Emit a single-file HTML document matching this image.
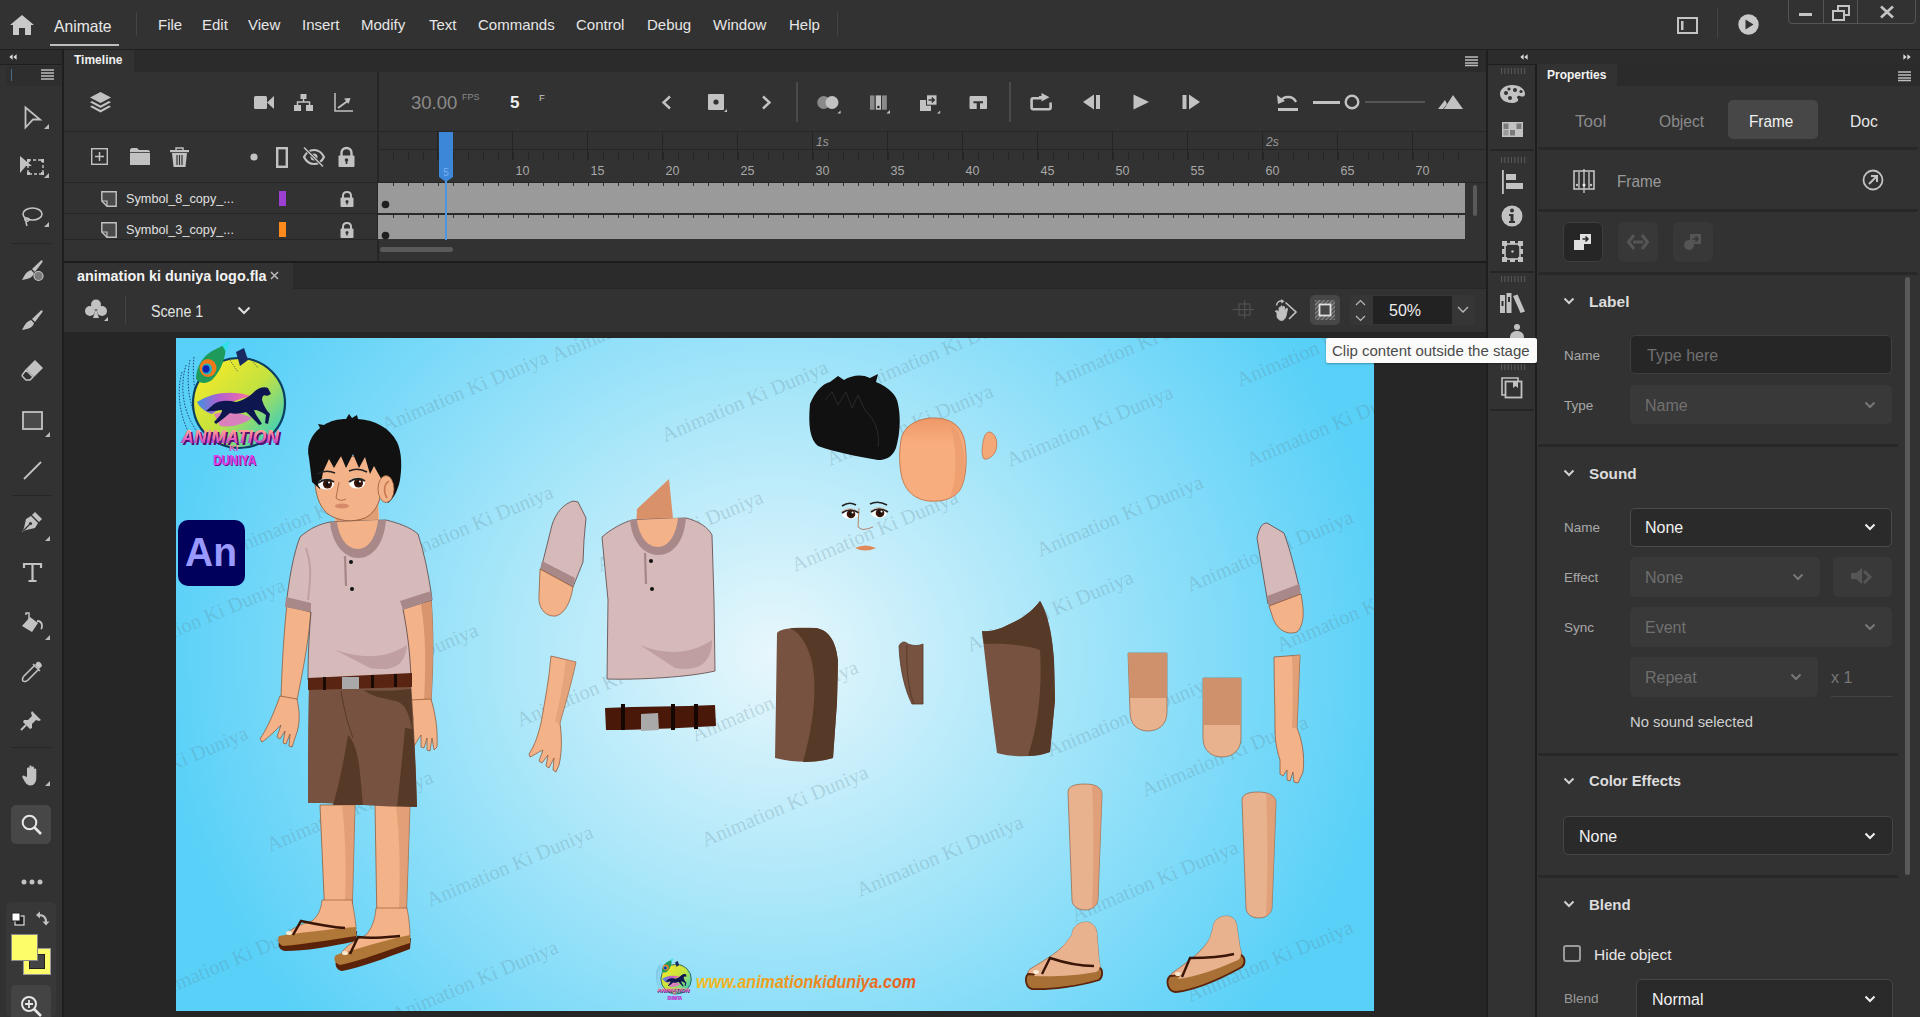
<!DOCTYPE html>
<html><head><meta charset="utf-8">
<style>
*{margin:0;padding:0;box-sizing:border-box}
html,body{width:1920px;height:1017px;overflow:hidden;background:#323232;font-family:"Liberation Sans",sans-serif;color:#d6d6d6}
.a{position:absolute}
.t{position:absolute;white-space:nowrap;line-height:1}
svg{position:absolute;overflow:visible}
</style></head><body>
<!-- MENU BAR -->
<div class="a" style="left:0;top:0;width:1920px;height:49px;background:#323232"></div>
<div class="a" style="left:0;top:49px;width:1920px;height:1px;background:#1f1f1f"></div>


<!-- menu content -->
<svg style="left:10px;top:15px" width="24" height="20" viewBox="0 0 24 20"><path d="M12 0 L24 10 L21 10 L21 20 L15 20 L15 13 L9 13 L9 20 L3 20 L3 10 L0 10 Z" fill="#c9c9c9"/></svg>
<div class="t" style="left:54px;top:18px;font-size:16.5px;color:#e8e8e8;transform:scaleX(0.95);transform-origin:left">Animate</div>
<div class="a" style="left:50px;top:44px;width:69px;height:2px;background:#bdbdbd"></div>
<div class="a" style="left:136px;top:12px;width:1px;height:24px;background:#444"></div>
<div class="t" style="left:158px;top:17px;font-size:15px;color:#e6e6e6">File</div>
<div class="t" style="left:202px;top:17px;font-size:15px;color:#e6e6e6">Edit</div>
<div class="t" style="left:248px;top:17px;font-size:15px;color:#e6e6e6">View</div>
<div class="t" style="left:302px;top:17px;font-size:15px;color:#e6e6e6">Insert</div>
<div class="t" style="left:361px;top:17px;font-size:15px;color:#e6e6e6">Modify</div>
<div class="t" style="left:429px;top:17px;font-size:15px;color:#e6e6e6">Text</div>
<div class="t" style="left:478px;top:17px;font-size:15px;color:#e6e6e6">Commands</div>
<div class="t" style="left:576px;top:17px;font-size:15px;color:#e6e6e6">Control</div>
<div class="t" style="left:647px;top:17px;font-size:15px;color:#e6e6e6">Debug</div>
<div class="t" style="left:713px;top:17px;font-size:15px;color:#e6e6e6">Window</div>
<div class="t" style="left:789px;top:17px;font-size:15px;color:#e6e6e6">Help</div>
<div class="a" style="left:837px;top:12px;width:1px;height:24px;background:#444"></div>
<!-- right side of menu -->
<svg style="left:1677px;top:17px" width="21" height="17" viewBox="0 0 21 17"><rect x="1" y="1" width="19" height="15" fill="none" stroke="#c4c4c4" stroke-width="2"/><rect x="4" y="4" width="2.5" height="9" fill="#c4c4c4"/></svg>
<div class="a" style="left:1717px;top:8px;width:1px;height:30px;background:#444"></div>
<svg style="left:1738px;top:14px" width="21" height="21" viewBox="0 0 21 21"><circle cx="10.5" cy="10.5" r="10.2" fill="#c9c9c9"/><path d="M7.5 5.5 L15.5 10.5 L7.5 15.5 Z" fill="#323232"/></svg>
<div class="a" style="left:1788px;top:-4px;width:128px;height:28px;border:1px solid #555;border-radius:0 0 4px 4px"></div>
<div class="a" style="left:1823px;top:0;width:1px;height:23px;background:#555"></div>
<div class="a" style="left:1857px;top:0;width:1px;height:23px;background:#555"></div>
<div class="a" style="left:1799px;top:13px;width:13px;height:3px;background:#c4c4c4"></div>
<svg style="left:1832px;top:5px" width="19" height="16" viewBox="0 0 19 16"><rect x="6" y="1" width="11" height="9" fill="none" stroke="#c4c4c4" stroke-width="2"/><rect x="1" y="6" width="11" height="9" fill="#323232" stroke="#c4c4c4" stroke-width="2"/></svg>
<svg style="left:1880px;top:6px" width="14" height="12" viewBox="0 0 14 12"><path d="M1 0.5 L13 11.5 M13 0.5 L1 11.5" stroke="#c4c4c4" stroke-width="2.6"/></svg>

<!-- LEFT TOOLBAR -->
<div class="a" style="left:0;top:50px;width:63px;height:967px;background:#323232"></div>
<div class="a" style="left:0;top:50px;width:63px;height:14px;background:#2c2c2c"></div>
<div class="a" style="left:0;top:64px;width:63px;height:1px;background:#1e1e1e"></div>
<div class="a" style="left:62px;top:50px;width:2px;height:967px;background:#1e1e1e"></div>


<!-- toolbar content -->
<svg style="left:9px;top:54px" width="8" height="6" viewBox="0 0 8 6"><path d="M3.6 0.3L0.3 3L3.6 5.7Z M7.6 0.3L4.3 3L7.6 5.7Z" fill="#ddd"/></svg>
<div class="a" style="left:6px;top:66px;width:56px;height:20px;background:#2e2e2e"></div>
<div class="a" style="left:11px;top:69px;width:1px;height:12px;background:#4a6a8a"></div>
<svg style="left:41px;top:69px" width="13" height="11" viewBox="0 0 13 11"><path d="M0 1H13M0 4H13M0 7H13M0 10H13" stroke="#bdbdbd" stroke-width="1.3"/></svg>
<svg style="left:24px;top:106px" width="18" height="24" viewBox="0 0 18 24"><path d="M1.5 1.5L16 13.5H9L1.5 21.5Z" fill="none" stroke="#c2c2c2" stroke-width="1.8" stroke-linejoin="miter"/></svg>
<svg style="left:44px;top:124px" width="5" height="5" viewBox="0 0 5 5"><path d="M5 0V5H0Z" fill="#bbb"/></svg>
<svg style="left:20px;top:156px" width="25" height="20" viewBox="0 0 25 20"><path d="M0 0L12 10H6L0 17Z" fill="#c2c2c2"/><rect x="8" y="4" width="15" height="14" fill="none" stroke="#c2c2c2" stroke-width="1.4" stroke-dasharray="3 2"/><rect x="7" y="3" width="3" height="3" fill="#c2c2c2"/><rect x="21" y="3" width="3" height="3" fill="#c2c2c2"/><rect x="7" y="16" width="3" height="3" fill="#c2c2c2"/><rect x="21" y="16" width="3" height="3" fill="#c2c2c2"/></svg>
<svg style="left:44px;top:173px" width="5" height="5" viewBox="0 0 5 5"><path d="M5 0V5H0Z" fill="#bbb"/></svg>
<svg style="left:21px;top:207px" width="22" height="20" viewBox="0 0 22 20"><ellipse cx="11.5" cy="7" rx="9.5" ry="6" fill="none" stroke="#c2c2c2" stroke-width="1.6"/><path d="M4 11C3 13 5 15 7 14C9 13 8 11 6 11C4 11 5 16 6 19" stroke="#c2c2c2" stroke-width="1.5" fill="none"/></svg>
<svg style="left:44px;top:222px" width="5" height="5" viewBox="0 0 5 5"><path d="M5 0V5H0Z" fill="#bbb"/></svg>
<div class="a" style="left:12px;top:243px;width:39px;height:1px;background:#262626"></div>
<svg style="left:22px;top:260px" width="22" height="21" viewBox="0 0 22 21"><path d="M19 0.5C20 0 21 1 20.5 2L13 12L10 9Z" fill="#c2c2c2"/><path d="M9 10L12 13C11 17 7 19 0 20C2 17 3 12 9 10Z" fill="#c2c2c2"/><circle cx="16.5" cy="16" r="4.5" fill="#7a7a7a" stroke="#c2c2c2" stroke-width="1.2"/></svg>
<svg style="left:22px;top:310px" width="21" height="20" viewBox="0 0 21 20"><path d="M19 0.5C20 0 21 1 20.5 2L13 12L10 9Z" fill="#c2c2c2"/><path d="M9 10L12 13C11 17 7 19 0 20C2 17 3 12 9 10Z" fill="#c2c2c2"/></svg>
<svg style="left:22px;top:360px" width="21" height="20" viewBox="0 0 21 20"><path d="M13 0L21 8L12 17L4 9Z" fill="#c2c2c2"/><path d="M4 10L11 17L8 20H4L0.8 16.8C0 16 0 15 0.8 14.2Z" fill="none" stroke="#c2c2c2" stroke-width="1.5"/></svg>
<svg style="left:22px;top:411px" width="21" height="19" viewBox="0 0 21 19"><rect x="1" y="1" width="19" height="17" fill="#4a4a4a" stroke="#c2c2c2" stroke-width="1.8"/></svg>
<svg style="left:45px;top:432px" width="5" height="5" viewBox="0 0 5 5"><path d="M5 0V5H0Z" fill="#bbb"/></svg>
<svg style="left:23px;top:461px" width="19" height="19" viewBox="0 0 19 19"><path d="M1 18L18 1" stroke="#c2c2c2" stroke-width="1.8"/></svg>
<div class="a" style="left:12px;top:495px;width:39px;height:1px;background:#262626"></div>
<svg style="left:21px;top:512px" width="21" height="21" viewBox="0 0 21 21"><path d="M14 0L21 7L18 10L11 3Z" fill="#c2c2c2"/><path d="M10 4L17 11L14 16L5 18L1 20L3 16L5 7Z" fill="#c2c2c2"/><path d="M2 19L8.5 12.5" stroke="#323232" stroke-width="1.3"/><circle cx="9.5" cy="11.5" r="1.6" fill="#323232"/></svg>
<svg style="left:45px;top:536px" width="5" height="5" viewBox="0 0 5 5"><path d="M5 0V5H0Z" fill="#bbb"/></svg>
<svg style="left:23px;top:563px" width="19" height="19" viewBox="0 0 19 19"><path d="M1 5V1H18V5M9.5 1V18M5.5 18H13.5" stroke="#c2c2c2" stroke-width="2.2" fill="none"/></svg>
<svg style="left:21px;top:612px" width="22" height="21" viewBox="0 0 22 21"><path d="M9 5L17 11L11 20L1 14Z" fill="#c2c2c2"/><path d="M5 3V1H8V7" stroke="#c2c2c2" stroke-width="1.5" fill="none"/><path d="M16 9C19 9 21 11 21 14C21 16 20 17 20 17" stroke="#c2c2c2" stroke-width="1.8" fill="none"/></svg>
<svg style="left:45px;top:635px" width="5" height="5" viewBox="0 0 5 5"><path d="M5 0V5H0Z" fill="#bbb"/></svg>
<svg style="left:21px;top:661px" width="22" height="22" viewBox="0 0 22 22"><path d="M16 1C18 -0.5 22 3 20.5 5.5L18 8L14 4Z" fill="#c2c2c2"/><path d="M12 3L19 10M13 5L3 15C1.5 16.5 1 19 2 20C3 21 5.5 20.5 7 19L17 9" stroke="#c2c2c2" stroke-width="1.6" fill="none"/></svg>
<svg style="left:20px;top:711px" width="21" height="20" viewBox="0 0 21 20"><path d="M12 0L21 9L19 10L16 9L12 13L12 17L10 18L3 11L4 9L8 9L12 5L11 2Z" fill="#c2c2c2"/><path d="M6 14L1 19" stroke="#c2c2c2" stroke-width="2"/></svg>
<div class="a" style="left:12px;top:747px;width:39px;height:1px;background:#262626"></div>
<svg style="left:22px;top:765px" width="20" height="21" viewBox="0 0 20 21"><path d="M5 12V3.5C5 2 7.3 2 7.3 3.5V10V1.8C7.3 0.2 9.7 0.2 9.7 1.8V10V2.5C9.7 1 12 1 12 2.5V10V4.5C12 3 14.3 3 14.3 4.5V13C14.3 17 12 20.5 8.5 20.5C6 20.5 4.5 19 3 17L0.5 12.5C-0.2 11 1.5 10 2.5 11Z" fill="#c2c2c2"/></svg>
<svg style="left:45px;top:781px" width="5" height="5" viewBox="0 0 5 5"><path d="M5 0V5H0Z" fill="#bbb"/></svg>
<div class="a" style="left:11px;top:805px;width:40px;height:39px;border-radius:5px;background:#474747"></div>
<svg style="left:21px;top:814px" width="21" height="21" viewBox="0 0 21 21"><circle cx="8.5" cy="8.5" r="6.8" fill="none" stroke="#e6e6e6" stroke-width="2"/><path d="M13.5 13.5L20 20" stroke="#e6e6e6" stroke-width="2.6"/></svg>
<svg style="left:21px;top:879px" width="22" height="6" viewBox="0 0 22 6"><circle cx="3" cy="3" r="2.5" fill="#c2c2c2"/><circle cx="11" cy="3" r="2.5" fill="#c2c2c2"/><circle cx="19" cy="3" r="2.5" fill="#c2c2c2"/></svg>
<div class="a" style="left:6px;top:902px;width:50px;height:115px;border-radius:5px;background:#383838"></div>
<svg style="left:11px;top:912px" width="14" height="14" viewBox="0 0 14 14"><rect x="4" y="4" width="9" height="9" fill="#222" stroke="#ddd" stroke-width="1.2"/><rect x="1" y="1" width="8" height="8" fill="#fff" stroke="#222" stroke-width="1"/></svg>
<svg style="left:36px;top:911px" width="14" height="15" viewBox="0 0 14 15"><path d="M3 4C8 4 10 6 10 11" stroke="#c2c2c2" stroke-width="2" fill="none"/><path d="M0 4L4 0.5V7.5Z" fill="#c2c2c2"/><path d="M6.5 10.5H13.5L10 14.5Z" fill="#c2c2c2"/></svg>
<div class="a" style="left:23px;top:948px;width:28px;height:27px;background:#fdfd6a;border:1px solid #999"></div>
<div class="a" style="left:29px;top:954px;width:16px;height:15px;background:#444;border:1.5px solid #222"></div>
<div class="a" style="left:11px;top:934px;width:27px;height:27px;background:#fdfd6a;border:1px solid #888"></div>
<div class="a" style="left:11px;top:985px;width:40px;height:39px;border-radius:5px;background:#444"></div>
<svg style="left:20px;top:995px" width="22" height="22" viewBox="0 0 22 22"><circle cx="9" cy="9" r="7" fill="none" stroke="#e6e6e6" stroke-width="2"/><path d="M9 5V13M5 9H13" stroke="#e6e6e6" stroke-width="1.8"/><path d="M14 14L21 21" stroke="#e6e6e6" stroke-width="2.6"/></svg>

<!-- TIMELINE PANEL -->
<div class="a" style="left:64px;top:50px;width:1422px;height:211px;background:#323232"></div>
<div class="a" style="left:134px;top:50px;width:1352px;height:22px;background:#2b2b2b"></div>


<!-- timeline content -->
<div class="t" style="left:74px;top:54px;font-size:12px;font-weight:bold;color:#f0f0f0">Timeline</div>
<svg style="left:1465px;top:56px" width="13" height="10" viewBox="0 0 13 10"><path d="M0 1H13M0 4H13M0 7H13M0 9.5H13" stroke="#bdbdbd" stroke-width="1.3"/></svg>
<!-- header row icons -->
<svg style="left:90px;top:92px" width="21" height="21" viewBox="0 0 21 21"><path d="M10.5 0 L21 5.5 L10.5 11 L0 5.5Z" fill="#c2c2c2"/><path d="M2 9 L10.5 13.5 L19 9 L21 10.2 L10.5 16 L0 10.2Z" fill="#c2c2c2"/><path d="M2 13.5 L10.5 18 L19 13.5 L21 14.7 L10.5 20.5 L0 14.7Z" fill="#c2c2c2"/></svg>
<svg style="left:254px;top:95px" width="20" height="15" viewBox="0 0 20 15"><rect x="0" y="1" width="13" height="13" rx="1.5" fill="#c2c2c2"/><path d="M13 7.5 L20 1 L20 14 Z" fill="#c2c2c2"/></svg>
<svg style="left:294px;top:94px" width="19" height="17" viewBox="0 0 19 17"><rect x="6.5" y="0" width="6" height="5" fill="#c2c2c2"/><rect x="0" y="11" width="7" height="6" fill="#c2c2c2"/><rect x="12" y="11" width="7" height="6" fill="#c2c2c2"/><path d="M9.5 5V8M3.5 11V8H15.5V11" stroke="#c2c2c2" stroke-width="1.5" fill="none"/></svg>
<svg style="left:334px;top:93px" width="19" height="19" viewBox="0 0 19 19"><path d="M1 0V18H19" stroke="#c2c2c2" stroke-width="1.5" fill="none"/><path d="M4 15 L15 7" stroke="#c2c2c2" stroke-width="1.8"/><path d="M10 5.5 L16.5 5 L14.5 11Z" fill="#c2c2c2"/></svg>
<div class="t" style="left:411px;top:94px;font-size:18.5px;color:#8a8a8a">30.00</div>
<div class="t" style="left:462px;top:93px;font-size:9px;color:#8a8a8a">FPS</div>
<div class="t" style="left:510px;top:94px;font-size:17px;font-weight:bold;color:#f0f0f0">5</div>
<div class="t" style="left:539px;top:93px;font-size:9.5px;color:#c8c8c8">F</div>
<svg style="left:661px;top:95px" width="11" height="15" viewBox="0 0 11 15"><path d="M9 1.5 L2.5 7.5 L9 13.5" stroke="#c2c2c2" stroke-width="2.4" fill="none"/></svg>
<svg style="left:708px;top:93px" width="19" height="19" viewBox="0 0 19 19"><rect x="0" y="1" width="16" height="16" rx="1" fill="#c2c2c2"/><circle cx="8" cy="9" r="2.6" fill="#323232"/><path d="M19 16V19H16Z" fill="#c2c2c2"/></svg>
<svg style="left:761px;top:95px" width="11" height="15" viewBox="0 0 11 15"><path d="M2 1.5 L8.5 7.5 L2 13.5" stroke="#c2c2c2" stroke-width="2.4" fill="none"/></svg>
<div class="a" style="left:796px;top:82px;width:2px;height:40px;background:#4a4a4a"></div>
<svg style="left:817px;top:95px" width="24" height="19" viewBox="0 0 24 19"><circle cx="6.7" cy="7.5" r="6.5" fill="#8a8a8a"/><circle cx="15" cy="7.5" r="6.5" fill="#c2c2c2"/><path d="M23.6 15.4V18.6H20.4Z" fill="#c2c2c2"/></svg>
<svg style="left:869px;top:94px" width="22" height="20" viewBox="0 0 22 20"><rect x="1" y="1.4" width="4.5" height="14.3" fill="#8a8a8a"/><rect x="6.8" y="1.4" width="5.2" height="14.3" fill="#c2c2c2"/><rect x="13" y="1.4" width="4.8" height="14.3" fill="#8a8a8a"/><circle cx="9.4" cy="13" r="1.3" fill="#222"/><path d="M21 16V19.6H17.4Z" fill="#c2c2c2"/></svg>
<svg style="left:919px;top:94px" width="22" height="20" viewBox="0 0 22 20"><rect x="1" y="6" width="11" height="11" fill="#c2c2c2"/><rect x="7.5" y="0.8" width="10.5" height="10.4" fill="#c2c2c2" stroke="#323232" stroke-width="1"/><path d="M9.5 6H15M12.8 3.6L15.2 6L12.8 8.4" stroke="#323232" stroke-width="1.5" fill="none"/><path d="M21.2 16.4V19.6H18Z" fill="#c2c2c2"/></svg>
<svg style="left:969px;top:95px" width="19" height="15" viewBox="0 0 19 15"><path d="M2 1H16.5C17.5 1 18 1.5 18 2.5V13C18 13.5 17.5 14 17 14H11V8.2H14V6.3H4.4V8.2H7.7V14H1.5C1 14 0.5 13.5 0.5 13V2.5C0.5 1.5 1 1 2 1Z" fill="#c2c2c2"/></svg>
<div class="a" style="left:1009px;top:82px;width:2px;height:40px;background:#4a4a4a"></div>
<svg style="left:1030px;top:93px" width="22" height="18" viewBox="0 0 22 18"><path d="M11 5.3H3.2C2.2 5.3 1.6 5.9 1.6 6.9V14.6C1.6 15.6 2.2 16.2 3.2 16.2H19C20 16.2 20.6 15.6 20.6 14.6V9.5" stroke="#c2c2c2" stroke-width="2.6" fill="none"/><path d="M11.5 0L19.5 4.2L11.5 8.4Z" fill="#c2c2c2"/><rect x="9" y="3" width="3.5" height="3" fill="#c2c2c2"/></svg>
<svg style="left:1083px;top:94px" width="18" height="16" viewBox="0 0 18 16"><path d="M0 8L11 0.5V15.5Z" fill="#c2c2c2"/><rect x="13" y="1" width="4" height="14" fill="#c2c2c2"/></svg>
<svg style="left:1133px;top:94px" width="17" height="16" viewBox="0 0 17 16"><path d="M0.5 0.5L16 8L0.5 15.5Z" fill="#c2c2c2"/></svg>
<svg style="left:1182px;top:94px" width="18" height="16" viewBox="0 0 18 16"><rect x="0.5" y="1" width="4" height="14" fill="#c2c2c2"/><path d="M18 8L7 0.5V15.5Z" fill="#c2c2c2"/></svg>
<svg style="left:1277px;top:93px" width="22" height="19" viewBox="0 0 22 19"><path d="M4 8C6 3 16 2 19 9" stroke="#c2c2c2" stroke-width="2.4" fill="none"/><path d="M0 2L1 11L8 8Z" fill="#c2c2c2"/><rect x="1" y="15" width="20" height="3" fill="#c2c2c2"/></svg>
<div class="a" style="left:1313px;top:101px;width:27px;height:2.5px;background:#c2c2c2"></div>
<svg style="left:1344px;top:94px" width="16" height="16" viewBox="0 0 16 16"><circle cx="8" cy="8" r="6.3" fill="none" stroke="#c2c2c2" stroke-width="2.4"/></svg>
<div class="a" style="left:1365px;top:101px;width:60px;height:2px;background:#555"></div>
<svg style="left:1438px;top:95px" width="25" height="14" viewBox="0 0 25 14"><path d="M0 14L7 5L9 9L5 14Z" fill="#c2c2c2"/><path d="M6 14L15 0L25 14Z" fill="#c2c2c2"/></svg>
<!-- separators -->
<div class="a" style="left:64px;top:131px;width:1422px;height:1px;background:#262626"></div>
<div class="a" style="left:64px;top:182px;width:1422px;height:1px;background:#262626"></div>
<div class="a" style="left:377px;top:72px;width:1.5px;height:189px;background:#262626"></div>
<!-- layer control row -->
<svg style="left:91px;top:148px" width="17" height="17" viewBox="0 0 17 17"><rect x="0.7" y="0.7" width="15.6" height="15.6" fill="none" stroke="#c2c2c2" stroke-width="1.4"/><path d="M8.5 4V13M4 8.5H13" stroke="#c2c2c2" stroke-width="1.5"/></svg>
<svg style="left:130px;top:148px" width="20" height="17" viewBox="0 0 20 17"><path d="M0 2C0 1 1 0 2 0H7L9 2H18C19 2 20 3 20 4V17H0Z" fill="#c2c2c2"/><path d="M0 4.5H20" stroke="#323232" stroke-width="0.8"/></svg>
<svg style="left:170px;top:147px" width="19" height="20" viewBox="0 0 19 20"><path d="M6 3V1H13V3" stroke="#c2c2c2" stroke-width="1.4" fill="none"/><rect x="0" y="3" width="19" height="2.2" fill="#c2c2c2"/><path d="M2 6H17L15.5 20H3.5Z" fill="#c2c2c2"/><path d="M7 8V18M9.5 8V18M12 8V18" stroke="#323232" stroke-width="1.2"/></svg>
<svg style="left:250px;top:153px" width="8" height="8" viewBox="0 0 8 8"><circle cx="4" cy="4" r="3.6" fill="#c2c2c2"/></svg>
<svg style="left:276px;top:147px" width="12" height="21" viewBox="0 0 12 21"><rect x="1.2" y="1.2" width="9.6" height="18.6" fill="none" stroke="#c2c2c2" stroke-width="2.4"/></svg>
<svg style="left:303px;top:147px" width="22" height="20" viewBox="0 0 22 20"><path d="M1 10C4 4 9 3 11 3C13 3 18 4 21 10C18 16 13 17 11 17C9 17 4 16 1 10Z" fill="none" stroke="#c2c2c2" stroke-width="2.2"/><circle cx="11" cy="10" r="3.5" fill="#c2c2c2"/><path d="M1 0.5L20 19.5" stroke="#323232" stroke-width="3"/><path d="M1 0.5L20 19.5" stroke="#c2c2c2" stroke-width="1.6"/></svg>
<svg style="left:338px;top:147px" width="17" height="20" viewBox="0 0 17 20"><path d="M3.5 9V6C3.5 3 5.5 1 8.5 1C11.5 1 13.5 3 13.5 6V9" stroke="#c2c2c2" stroke-width="2.4" fill="none"/><rect x="0.5" y="8.5" width="16" height="11.5" rx="1" fill="#c2c2c2"/><circle cx="8.5" cy="13" r="1.8" fill="#323232"/><rect x="7.7" y="13" width="1.6" height="4" fill="#323232"/></svg>
<!-- layer rows -->
<div class="a" style="left:64px;top:213px;width:314px;height:1px;background:#262626"></div>
<div class="a" style="left:64px;top:239px;width:314px;height:1px;background:#262626"></div>
<svg style="left:101px;top:191px" width="16" height="16" viewBox="0 0 16 16"><path d="M0.8 0.8H15.2V15.2H6L0.8 10Z" fill="#4a4a4a" stroke="#c2c2c2" stroke-width="1.4"/><path d="M0.8 10H6V15.2" stroke="#c2c2c2" stroke-width="1.2" fill="none"/><path d="M2.5 11.5L4.5 13.5" stroke="#c2c2c2" stroke-width="1"/></svg>
<div class="t" style="left:126px;top:193px;font-size:12.7px;color:#e0e0e0">Symbol_8_copy_...</div>
<div class="a" style="left:279px;top:191px;width:7px;height:15px;background:#9b40d1"></div>
<svg style="left:340px;top:191px" width="14" height="16" viewBox="0 0 14 16"><path d="M3 7V5C3 2.5 4.5 1 7 1C9.5 1 11 2.5 11 5V7" stroke="#c2c2c2" stroke-width="2" fill="none"/><rect x="0.5" y="6.5" width="13" height="9.5" rx="1" fill="#c2c2c2"/><circle cx="7" cy="10.5" r="1.5" fill="#323232"/><rect x="6.3" y="10.5" width="1.4" height="3" fill="#323232"/></svg>
<svg style="left:101px;top:222px" width="16" height="16" viewBox="0 0 16 16"><path d="M0.8 0.8H15.2V15.2H6L0.8 10Z" fill="#4a4a4a" stroke="#c2c2c2" stroke-width="1.4"/><path d="M0.8 10H6V15.2" stroke="#c2c2c2" stroke-width="1.2" fill="none"/><path d="M2.5 11.5L4.5 13.5" stroke="#c2c2c2" stroke-width="1"/></svg>
<div class="t" style="left:126px;top:224px;font-size:12.7px;color:#e0e0e0">Symbol_3_copy_...</div>
<div class="a" style="left:279px;top:222px;width:7px;height:15px;background:#ff8a1c"></div>
<svg style="left:340px;top:222px" width="14" height="16" viewBox="0 0 14 16"><path d="M3 7V5C3 2.5 4.5 1 7 1C9.5 1 11 2.5 11 5V7" stroke="#c2c2c2" stroke-width="2" fill="none"/><rect x="0.5" y="6.5" width="13" height="9.5" rx="1" fill="#c2c2c2"/><circle cx="7" cy="10.5" r="1.5" fill="#323232"/><rect x="6.3" y="10.5" width="1.4" height="3" fill="#323232"/></svg>

<div class="a" style="left:378px;top:149px;width:1108px;height:1px;background:#262626"></div>
<div class="a" style="left:377.5px;top:152px;width:1.5px;height:8px;background:#262626"></div>
<div class="a" style="left:392.5px;top:152px;width:1.5px;height:8px;background:#262626"></div>
<div class="a" style="left:407.5px;top:152px;width:1.5px;height:8px;background:#262626"></div>
<div class="a" style="left:422.5px;top:152px;width:1.5px;height:8px;background:#262626"></div>
<div class="a" style="left:437.5px;top:152px;width:1.5px;height:8px;background:#262626"></div>
<div class="a" style="left:452.5px;top:152px;width:1.5px;height:8px;background:#262626"></div>
<div class="a" style="left:467.5px;top:152px;width:1.5px;height:8px;background:#262626"></div>
<div class="a" style="left:482.5px;top:152px;width:1.5px;height:8px;background:#262626"></div>
<div class="a" style="left:497.5px;top:152px;width:1.5px;height:8px;background:#262626"></div>
<div class="a" style="left:512.5px;top:152px;width:1.5px;height:8px;background:#262626"></div>
<div class="a" style="left:527.5px;top:152px;width:1.5px;height:8px;background:#262626"></div>
<div class="a" style="left:542.5px;top:152px;width:1.5px;height:8px;background:#262626"></div>
<div class="a" style="left:557.5px;top:152px;width:1.5px;height:8px;background:#262626"></div>
<div class="a" style="left:572.5px;top:152px;width:1.5px;height:8px;background:#262626"></div>
<div class="a" style="left:587.5px;top:152px;width:1.5px;height:8px;background:#262626"></div>
<div class="a" style="left:602.5px;top:152px;width:1.5px;height:8px;background:#262626"></div>
<div class="a" style="left:617.5px;top:152px;width:1.5px;height:8px;background:#262626"></div>
<div class="a" style="left:632.5px;top:152px;width:1.5px;height:8px;background:#262626"></div>
<div class="a" style="left:647.5px;top:152px;width:1.5px;height:8px;background:#262626"></div>
<div class="a" style="left:662.5px;top:152px;width:1.5px;height:8px;background:#262626"></div>
<div class="a" style="left:677.5px;top:152px;width:1.5px;height:8px;background:#262626"></div>
<div class="a" style="left:692.5px;top:152px;width:1.5px;height:8px;background:#262626"></div>
<div class="a" style="left:707.5px;top:152px;width:1.5px;height:8px;background:#262626"></div>
<div class="a" style="left:722.5px;top:152px;width:1.5px;height:8px;background:#262626"></div>
<div class="a" style="left:737.5px;top:152px;width:1.5px;height:8px;background:#262626"></div>
<div class="a" style="left:752.5px;top:152px;width:1.5px;height:8px;background:#262626"></div>
<div class="a" style="left:767.5px;top:152px;width:1.5px;height:8px;background:#262626"></div>
<div class="a" style="left:782.5px;top:152px;width:1.5px;height:8px;background:#262626"></div>
<div class="a" style="left:797.5px;top:152px;width:1.5px;height:8px;background:#262626"></div>
<div class="a" style="left:812.5px;top:152px;width:1.5px;height:8px;background:#262626"></div>
<div class="a" style="left:827.5px;top:152px;width:1.5px;height:8px;background:#262626"></div>
<div class="a" style="left:842.5px;top:152px;width:1.5px;height:8px;background:#262626"></div>
<div class="a" style="left:857.5px;top:152px;width:1.5px;height:8px;background:#262626"></div>
<div class="a" style="left:872.5px;top:152px;width:1.5px;height:8px;background:#262626"></div>
<div class="a" style="left:887.5px;top:152px;width:1.5px;height:8px;background:#262626"></div>
<div class="a" style="left:902.5px;top:152px;width:1.5px;height:8px;background:#262626"></div>
<div class="a" style="left:917.5px;top:152px;width:1.5px;height:8px;background:#262626"></div>
<div class="a" style="left:932.5px;top:152px;width:1.5px;height:8px;background:#262626"></div>
<div class="a" style="left:947.5px;top:152px;width:1.5px;height:8px;background:#262626"></div>
<div class="a" style="left:962.5px;top:152px;width:1.5px;height:8px;background:#262626"></div>
<div class="a" style="left:977.5px;top:152px;width:1.5px;height:8px;background:#262626"></div>
<div class="a" style="left:992.5px;top:152px;width:1.5px;height:8px;background:#262626"></div>
<div class="a" style="left:1007.5px;top:152px;width:1.5px;height:8px;background:#262626"></div>
<div class="a" style="left:1022.5px;top:152px;width:1.5px;height:8px;background:#262626"></div>
<div class="a" style="left:1037.5px;top:152px;width:1.5px;height:8px;background:#262626"></div>
<div class="a" style="left:1052.5px;top:152px;width:1.5px;height:8px;background:#262626"></div>
<div class="a" style="left:1067.5px;top:152px;width:1.5px;height:8px;background:#262626"></div>
<div class="a" style="left:1082.5px;top:152px;width:1.5px;height:8px;background:#262626"></div>
<div class="a" style="left:1097.5px;top:152px;width:1.5px;height:8px;background:#262626"></div>
<div class="a" style="left:1112.5px;top:152px;width:1.5px;height:8px;background:#262626"></div>
<div class="a" style="left:1127.5px;top:152px;width:1.5px;height:8px;background:#262626"></div>
<div class="a" style="left:1142.5px;top:152px;width:1.5px;height:8px;background:#262626"></div>
<div class="a" style="left:1157.5px;top:152px;width:1.5px;height:8px;background:#262626"></div>
<div class="a" style="left:1172.5px;top:152px;width:1.5px;height:8px;background:#262626"></div>
<div class="a" style="left:1187.5px;top:152px;width:1.5px;height:8px;background:#262626"></div>
<div class="a" style="left:1202.5px;top:152px;width:1.5px;height:8px;background:#262626"></div>
<div class="a" style="left:1217.5px;top:152px;width:1.5px;height:8px;background:#262626"></div>
<div class="a" style="left:1232.5px;top:152px;width:1.5px;height:8px;background:#262626"></div>
<div class="a" style="left:1247.5px;top:152px;width:1.5px;height:8px;background:#262626"></div>
<div class="a" style="left:1262.5px;top:152px;width:1.5px;height:8px;background:#262626"></div>
<div class="a" style="left:1277.5px;top:152px;width:1.5px;height:8px;background:#262626"></div>
<div class="a" style="left:1292.5px;top:152px;width:1.5px;height:8px;background:#262626"></div>
<div class="a" style="left:1307.5px;top:152px;width:1.5px;height:8px;background:#262626"></div>
<div class="a" style="left:1322.5px;top:152px;width:1.5px;height:8px;background:#262626"></div>
<div class="a" style="left:1337.5px;top:152px;width:1.5px;height:8px;background:#262626"></div>
<div class="a" style="left:1352.5px;top:152px;width:1.5px;height:8px;background:#262626"></div>
<div class="a" style="left:1367.5px;top:152px;width:1.5px;height:8px;background:#262626"></div>
<div class="a" style="left:1382.5px;top:152px;width:1.5px;height:8px;background:#262626"></div>
<div class="a" style="left:1397.5px;top:152px;width:1.5px;height:8px;background:#262626"></div>
<div class="a" style="left:1412.5px;top:152px;width:1.5px;height:8px;background:#262626"></div>
<div class="a" style="left:1427.5px;top:152px;width:1.5px;height:8px;background:#262626"></div>
<div class="a" style="left:1442.5px;top:152px;width:1.5px;height:8px;background:#262626"></div>
<div class="a" style="left:1457.5px;top:152px;width:1.5px;height:8px;background:#262626"></div>
<div class="t" style="left:502.5px;width:40px;text-align:center;top:165px;font-size:12.5px;color:#a8a8a8">10</div>
<div class="t" style="left:577.5px;width:40px;text-align:center;top:165px;font-size:12.5px;color:#a8a8a8">15</div>
<div class="t" style="left:652.5px;width:40px;text-align:center;top:165px;font-size:12.5px;color:#a8a8a8">20</div>
<div class="t" style="left:727.5px;width:40px;text-align:center;top:165px;font-size:12.5px;color:#a8a8a8">25</div>
<div class="t" style="left:802.5px;width:40px;text-align:center;top:165px;font-size:12.5px;color:#a8a8a8">30</div>
<div class="t" style="left:877.5px;width:40px;text-align:center;top:165px;font-size:12.5px;color:#a8a8a8">35</div>
<div class="t" style="left:952.5px;width:40px;text-align:center;top:165px;font-size:12.5px;color:#a8a8a8">40</div>
<div class="t" style="left:1027.5px;width:40px;text-align:center;top:165px;font-size:12.5px;color:#a8a8a8">45</div>
<div class="t" style="left:1102.5px;width:40px;text-align:center;top:165px;font-size:12.5px;color:#a8a8a8">50</div>
<div class="t" style="left:1177.5px;width:40px;text-align:center;top:165px;font-size:12.5px;color:#a8a8a8">55</div>
<div class="t" style="left:1252.5px;width:40px;text-align:center;top:165px;font-size:12.5px;color:#a8a8a8">60</div>
<div class="t" style="left:1327.5px;width:40px;text-align:center;top:165px;font-size:12.5px;color:#a8a8a8">65</div>
<div class="t" style="left:1402.5px;width:40px;text-align:center;top:165px;font-size:12.5px;color:#a8a8a8">70</div>
<div class="t" style="left:816px;top:136px;font-size:12px;font-style:italic;color:#9a9a9a">1s</div>
<div class="t" style="left:1266px;top:136px;font-size:12px;font-style:italic;color:#9a9a9a">2s</div>
<div class="a" style="left:378px;top:183px;width:1087px;height:56px;background:#9a9a9a"></div>
<div class="a" style="left:378px;top:213px;width:1087px;height:1.5px;background:#2a2a2a"></div>
<div class="a" style="left:392.5px;top:183px;width:1px;height:3px;background:#333"></div>
<div class="a" style="left:392.5px;top:214.5px;width:1px;height:3px;background:#333"></div>
<div class="a" style="left:407.5px;top:183px;width:1px;height:3px;background:#333"></div>
<div class="a" style="left:407.5px;top:214.5px;width:1px;height:3px;background:#333"></div>
<div class="a" style="left:422.5px;top:183px;width:1px;height:3px;background:#333"></div>
<div class="a" style="left:422.5px;top:214.5px;width:1px;height:3px;background:#333"></div>
<div class="a" style="left:437.5px;top:183px;width:1px;height:3px;background:#333"></div>
<div class="a" style="left:437.5px;top:214.5px;width:1px;height:3px;background:#333"></div>
<div class="a" style="left:452.5px;top:183px;width:1px;height:3px;background:#333"></div>
<div class="a" style="left:452.5px;top:214.5px;width:1px;height:3px;background:#333"></div>
<div class="a" style="left:467.5px;top:183px;width:1px;height:3px;background:#333"></div>
<div class="a" style="left:467.5px;top:214.5px;width:1px;height:3px;background:#333"></div>
<div class="a" style="left:482.5px;top:183px;width:1px;height:3px;background:#333"></div>
<div class="a" style="left:482.5px;top:214.5px;width:1px;height:3px;background:#333"></div>
<div class="a" style="left:497.5px;top:183px;width:1px;height:3px;background:#333"></div>
<div class="a" style="left:497.5px;top:214.5px;width:1px;height:3px;background:#333"></div>
<div class="a" style="left:512.5px;top:183px;width:1px;height:3px;background:#333"></div>
<div class="a" style="left:512.5px;top:214.5px;width:1px;height:3px;background:#333"></div>
<div class="a" style="left:527.5px;top:183px;width:1px;height:3px;background:#333"></div>
<div class="a" style="left:527.5px;top:214.5px;width:1px;height:3px;background:#333"></div>
<div class="a" style="left:542.5px;top:183px;width:1px;height:3px;background:#333"></div>
<div class="a" style="left:542.5px;top:214.5px;width:1px;height:3px;background:#333"></div>
<div class="a" style="left:557.5px;top:183px;width:1px;height:3px;background:#333"></div>
<div class="a" style="left:557.5px;top:214.5px;width:1px;height:3px;background:#333"></div>
<div class="a" style="left:572.5px;top:183px;width:1px;height:3px;background:#333"></div>
<div class="a" style="left:572.5px;top:214.5px;width:1px;height:3px;background:#333"></div>
<div class="a" style="left:587.5px;top:183px;width:1px;height:3px;background:#333"></div>
<div class="a" style="left:587.5px;top:214.5px;width:1px;height:3px;background:#333"></div>
<div class="a" style="left:602.5px;top:183px;width:1px;height:3px;background:#333"></div>
<div class="a" style="left:602.5px;top:214.5px;width:1px;height:3px;background:#333"></div>
<div class="a" style="left:617.5px;top:183px;width:1px;height:3px;background:#333"></div>
<div class="a" style="left:617.5px;top:214.5px;width:1px;height:3px;background:#333"></div>
<div class="a" style="left:632.5px;top:183px;width:1px;height:3px;background:#333"></div>
<div class="a" style="left:632.5px;top:214.5px;width:1px;height:3px;background:#333"></div>
<div class="a" style="left:647.5px;top:183px;width:1px;height:3px;background:#333"></div>
<div class="a" style="left:647.5px;top:214.5px;width:1px;height:3px;background:#333"></div>
<div class="a" style="left:662.5px;top:183px;width:1px;height:3px;background:#333"></div>
<div class="a" style="left:662.5px;top:214.5px;width:1px;height:3px;background:#333"></div>
<div class="a" style="left:677.5px;top:183px;width:1px;height:3px;background:#333"></div>
<div class="a" style="left:677.5px;top:214.5px;width:1px;height:3px;background:#333"></div>
<div class="a" style="left:692.5px;top:183px;width:1px;height:3px;background:#333"></div>
<div class="a" style="left:692.5px;top:214.5px;width:1px;height:3px;background:#333"></div>
<div class="a" style="left:707.5px;top:183px;width:1px;height:3px;background:#333"></div>
<div class="a" style="left:707.5px;top:214.5px;width:1px;height:3px;background:#333"></div>
<div class="a" style="left:722.5px;top:183px;width:1px;height:3px;background:#333"></div>
<div class="a" style="left:722.5px;top:214.5px;width:1px;height:3px;background:#333"></div>
<div class="a" style="left:737.5px;top:183px;width:1px;height:3px;background:#333"></div>
<div class="a" style="left:737.5px;top:214.5px;width:1px;height:3px;background:#333"></div>
<div class="a" style="left:752.5px;top:183px;width:1px;height:3px;background:#333"></div>
<div class="a" style="left:752.5px;top:214.5px;width:1px;height:3px;background:#333"></div>
<div class="a" style="left:767.5px;top:183px;width:1px;height:3px;background:#333"></div>
<div class="a" style="left:767.5px;top:214.5px;width:1px;height:3px;background:#333"></div>
<div class="a" style="left:782.5px;top:183px;width:1px;height:3px;background:#333"></div>
<div class="a" style="left:782.5px;top:214.5px;width:1px;height:3px;background:#333"></div>
<div class="a" style="left:797.5px;top:183px;width:1px;height:3px;background:#333"></div>
<div class="a" style="left:797.5px;top:214.5px;width:1px;height:3px;background:#333"></div>
<div class="a" style="left:812.5px;top:183px;width:1px;height:3px;background:#333"></div>
<div class="a" style="left:812.5px;top:214.5px;width:1px;height:3px;background:#333"></div>
<div class="a" style="left:827.5px;top:183px;width:1px;height:3px;background:#333"></div>
<div class="a" style="left:827.5px;top:214.5px;width:1px;height:3px;background:#333"></div>
<div class="a" style="left:842.5px;top:183px;width:1px;height:3px;background:#333"></div>
<div class="a" style="left:842.5px;top:214.5px;width:1px;height:3px;background:#333"></div>
<div class="a" style="left:857.5px;top:183px;width:1px;height:3px;background:#333"></div>
<div class="a" style="left:857.5px;top:214.5px;width:1px;height:3px;background:#333"></div>
<div class="a" style="left:872.5px;top:183px;width:1px;height:3px;background:#333"></div>
<div class="a" style="left:872.5px;top:214.5px;width:1px;height:3px;background:#333"></div>
<div class="a" style="left:887.5px;top:183px;width:1px;height:3px;background:#333"></div>
<div class="a" style="left:887.5px;top:214.5px;width:1px;height:3px;background:#333"></div>
<div class="a" style="left:902.5px;top:183px;width:1px;height:3px;background:#333"></div>
<div class="a" style="left:902.5px;top:214.5px;width:1px;height:3px;background:#333"></div>
<div class="a" style="left:917.5px;top:183px;width:1px;height:3px;background:#333"></div>
<div class="a" style="left:917.5px;top:214.5px;width:1px;height:3px;background:#333"></div>
<div class="a" style="left:932.5px;top:183px;width:1px;height:3px;background:#333"></div>
<div class="a" style="left:932.5px;top:214.5px;width:1px;height:3px;background:#333"></div>
<div class="a" style="left:947.5px;top:183px;width:1px;height:3px;background:#333"></div>
<div class="a" style="left:947.5px;top:214.5px;width:1px;height:3px;background:#333"></div>
<div class="a" style="left:962.5px;top:183px;width:1px;height:3px;background:#333"></div>
<div class="a" style="left:962.5px;top:214.5px;width:1px;height:3px;background:#333"></div>
<div class="a" style="left:977.5px;top:183px;width:1px;height:3px;background:#333"></div>
<div class="a" style="left:977.5px;top:214.5px;width:1px;height:3px;background:#333"></div>
<div class="a" style="left:992.5px;top:183px;width:1px;height:3px;background:#333"></div>
<div class="a" style="left:992.5px;top:214.5px;width:1px;height:3px;background:#333"></div>
<div class="a" style="left:1007.5px;top:183px;width:1px;height:3px;background:#333"></div>
<div class="a" style="left:1007.5px;top:214.5px;width:1px;height:3px;background:#333"></div>
<div class="a" style="left:1022.5px;top:183px;width:1px;height:3px;background:#333"></div>
<div class="a" style="left:1022.5px;top:214.5px;width:1px;height:3px;background:#333"></div>
<div class="a" style="left:1037.5px;top:183px;width:1px;height:3px;background:#333"></div>
<div class="a" style="left:1037.5px;top:214.5px;width:1px;height:3px;background:#333"></div>
<div class="a" style="left:1052.5px;top:183px;width:1px;height:3px;background:#333"></div>
<div class="a" style="left:1052.5px;top:214.5px;width:1px;height:3px;background:#333"></div>
<div class="a" style="left:1067.5px;top:183px;width:1px;height:3px;background:#333"></div>
<div class="a" style="left:1067.5px;top:214.5px;width:1px;height:3px;background:#333"></div>
<div class="a" style="left:1082.5px;top:183px;width:1px;height:3px;background:#333"></div>
<div class="a" style="left:1082.5px;top:214.5px;width:1px;height:3px;background:#333"></div>
<div class="a" style="left:1097.5px;top:183px;width:1px;height:3px;background:#333"></div>
<div class="a" style="left:1097.5px;top:214.5px;width:1px;height:3px;background:#333"></div>
<div class="a" style="left:1112.5px;top:183px;width:1px;height:3px;background:#333"></div>
<div class="a" style="left:1112.5px;top:214.5px;width:1px;height:3px;background:#333"></div>
<div class="a" style="left:1127.5px;top:183px;width:1px;height:3px;background:#333"></div>
<div class="a" style="left:1127.5px;top:214.5px;width:1px;height:3px;background:#333"></div>
<div class="a" style="left:1142.5px;top:183px;width:1px;height:3px;background:#333"></div>
<div class="a" style="left:1142.5px;top:214.5px;width:1px;height:3px;background:#333"></div>
<div class="a" style="left:1157.5px;top:183px;width:1px;height:3px;background:#333"></div>
<div class="a" style="left:1157.5px;top:214.5px;width:1px;height:3px;background:#333"></div>
<div class="a" style="left:1172.5px;top:183px;width:1px;height:3px;background:#333"></div>
<div class="a" style="left:1172.5px;top:214.5px;width:1px;height:3px;background:#333"></div>
<div class="a" style="left:1187.5px;top:183px;width:1px;height:3px;background:#333"></div>
<div class="a" style="left:1187.5px;top:214.5px;width:1px;height:3px;background:#333"></div>
<div class="a" style="left:1202.5px;top:183px;width:1px;height:3px;background:#333"></div>
<div class="a" style="left:1202.5px;top:214.5px;width:1px;height:3px;background:#333"></div>
<div class="a" style="left:1217.5px;top:183px;width:1px;height:3px;background:#333"></div>
<div class="a" style="left:1217.5px;top:214.5px;width:1px;height:3px;background:#333"></div>
<div class="a" style="left:1232.5px;top:183px;width:1px;height:3px;background:#333"></div>
<div class="a" style="left:1232.5px;top:214.5px;width:1px;height:3px;background:#333"></div>
<div class="a" style="left:1247.5px;top:183px;width:1px;height:3px;background:#333"></div>
<div class="a" style="left:1247.5px;top:214.5px;width:1px;height:3px;background:#333"></div>
<div class="a" style="left:1262.5px;top:183px;width:1px;height:3px;background:#333"></div>
<div class="a" style="left:1262.5px;top:214.5px;width:1px;height:3px;background:#333"></div>
<div class="a" style="left:1277.5px;top:183px;width:1px;height:3px;background:#333"></div>
<div class="a" style="left:1277.5px;top:214.5px;width:1px;height:3px;background:#333"></div>
<div class="a" style="left:1292.5px;top:183px;width:1px;height:3px;background:#333"></div>
<div class="a" style="left:1292.5px;top:214.5px;width:1px;height:3px;background:#333"></div>
<div class="a" style="left:1307.5px;top:183px;width:1px;height:3px;background:#333"></div>
<div class="a" style="left:1307.5px;top:214.5px;width:1px;height:3px;background:#333"></div>
<div class="a" style="left:1322.5px;top:183px;width:1px;height:3px;background:#333"></div>
<div class="a" style="left:1322.5px;top:214.5px;width:1px;height:3px;background:#333"></div>
<div class="a" style="left:1337.5px;top:183px;width:1px;height:3px;background:#333"></div>
<div class="a" style="left:1337.5px;top:214.5px;width:1px;height:3px;background:#333"></div>
<div class="a" style="left:1352.5px;top:183px;width:1px;height:3px;background:#333"></div>
<div class="a" style="left:1352.5px;top:214.5px;width:1px;height:3px;background:#333"></div>
<div class="a" style="left:1367.5px;top:183px;width:1px;height:3px;background:#333"></div>
<div class="a" style="left:1367.5px;top:214.5px;width:1px;height:3px;background:#333"></div>
<div class="a" style="left:1382.5px;top:183px;width:1px;height:3px;background:#333"></div>
<div class="a" style="left:1382.5px;top:214.5px;width:1px;height:3px;background:#333"></div>
<div class="a" style="left:1397.5px;top:183px;width:1px;height:3px;background:#333"></div>
<div class="a" style="left:1397.5px;top:214.5px;width:1px;height:3px;background:#333"></div>
<div class="a" style="left:1412.5px;top:183px;width:1px;height:3px;background:#333"></div>
<div class="a" style="left:1412.5px;top:214.5px;width:1px;height:3px;background:#333"></div>
<div class="a" style="left:1427.5px;top:183px;width:1px;height:3px;background:#333"></div>
<div class="a" style="left:1427.5px;top:214.5px;width:1px;height:3px;background:#333"></div>
<div class="a" style="left:1442.5px;top:183px;width:1px;height:3px;background:#333"></div>
<div class="a" style="left:1442.5px;top:214.5px;width:1px;height:3px;background:#333"></div>
<div class="a" style="left:1457.5px;top:183px;width:1px;height:3px;background:#333"></div>
<div class="a" style="left:1457.5px;top:214.5px;width:1px;height:3px;background:#333"></div>
<svg style="left:381px;top:200px" width="9" height="9"><circle cx="4.5" cy="4.5" r="3.8" fill="#1f1f1f"/></svg>
<svg style="left:381px;top:231px" width="9" height="9"><circle cx="4.5" cy="4.5" r="3.8" fill="#1f1f1f"/></svg>
<svg style="left:439px;top:132px" width="15" height="108" viewBox="0 0 15 108"><path d="M0 0H14V45L7 50L0 45Z" fill="#3d87d8"/><rect x="6" y="49" width="2" height="59" fill="#4d96e3"/><text x="7" y="44" font-size="10" fill="#76b0ef" text-anchor="middle" font-family="Liberation Sans">5</text></svg>
<div class="a" style="left:380px;top:247px;width:73px;height:5px;border-radius:3px;background:#5a5a5a"></div>
<div class="a" style="left:1473px;top:185px;width:4px;height:31px;border-radius:2px;background:#5a5a5a"></div>
<div class="a" style="left:437.0px;top:132px;width:1px;height:28px;background:#242424"></div><div class="a" style="left:512.0px;top:132px;width:1px;height:28px;background:#242424"></div><div class="a" style="left:587.0px;top:132px;width:1px;height:28px;background:#242424"></div><div class="a" style="left:662.0px;top:132px;width:1px;height:28px;background:#242424"></div><div class="a" style="left:737.0px;top:132px;width:1px;height:28px;background:#242424"></div><div class="a" style="left:812.0px;top:132px;width:1px;height:28px;background:#242424"></div><div class="a" style="left:887.0px;top:132px;width:1px;height:28px;background:#242424"></div><div class="a" style="left:962.0px;top:132px;width:1px;height:28px;background:#242424"></div><div class="a" style="left:1037.0px;top:132px;width:1px;height:28px;background:#242424"></div><div class="a" style="left:1112.0px;top:132px;width:1px;height:28px;background:#242424"></div><div class="a" style="left:1187.0px;top:132px;width:1px;height:28px;background:#242424"></div><div class="a" style="left:1262.0px;top:132px;width:1px;height:28px;background:#242424"></div><div class="a" style="left:1337.0px;top:132px;width:1px;height:28px;background:#242424"></div><div class="a" style="left:1412.0px;top:132px;width:1px;height:28px;background:#242424"></div>
<!-- DOC AREA -->
<div class="a" style="left:64px;top:261px;width:1422px;height:2px;background:#1c1c1c"></div>
<div class="a" style="left:64px;top:263px;width:1422px;height:26px;background:#2b2b2b"></div>
<div class="a" style="left:64px;top:263px;width:229px;height:26px;background:#323232"></div>
<div class="a" style="left:64px;top:289px;width:1422px;height:43px;background:#323232"></div>
<div class="a" style="left:293px;top:288px;width:1193px;height:1px;background:#272727"></div>
<div class="a" style="left:64px;top:332px;width:1422px;height:685px;background:#262626"></div>

<!-- STAGE -->
<div class="a" id="stage" style="left:176px;top:338px;width:1198px;height:673px;background:radial-gradient(ellipse 52% 85% at 50% 47%,#e8f7fc 0%,#a8e6f9 45%,#58d0f8 100%);overflow:hidden"></div>
<!-- SVG START -->
<svg style="left:176px;top:338px;overflow:hidden" width="1198" height="673" viewBox="176 338 1198 673">
<text x="830" y="466" transform="rotate(-23 830 466)" font-family="Liberation Serif" font-size="20.5" fill="#60808e" fill-opacity="0.26">Animation Ki Duniya</text>
<text x="385" y="432" transform="rotate(-23 385 432)" font-family="Liberation Serif" font-size="20.5" fill="#60808e" fill-opacity="0.26">Animation Ki Duniya</text>
<text x="665" y="442" transform="rotate(-23 665 442)" font-family="Liberation Serif" font-size="20.5" fill="#60808e" fill-opacity="0.26">Animation Ki Duniya</text>
<text x="1010" y="467" transform="rotate(-23 1010 467)" font-family="Liberation Serif" font-size="20.5" fill="#60808e" fill-opacity="0.26">Animation Ki Duniya</text>
<text x="390" y="567" transform="rotate(-23 390 567)" font-family="Liberation Serif" font-size="20.5" fill="#60808e" fill-opacity="0.26">Animation Ki Duniya</text>
<text x="600" y="572" transform="rotate(-23 600 572)" font-family="Liberation Serif" font-size="20.5" fill="#60808e" fill-opacity="0.26">Animation Ki Duniya</text>
<text x="795" y="572" transform="rotate(-23 795 572)" font-family="Liberation Serif" font-size="20.5" fill="#60808e" fill-opacity="0.26">Animation Ki Duniya</text>
<text x="1040" y="557" transform="rotate(-23 1040 557)" font-family="Liberation Serif" font-size="20.5" fill="#60808e" fill-opacity="0.26">Animation Ki Duniya</text>
<text x="1190" y="592" transform="rotate(-23 1190 592)" font-family="Liberation Serif" font-size="20.5" fill="#60808e" fill-opacity="0.26">Animation Ki Duniya</text>
<text x="520" y="727" transform="rotate(-23 520 727)" font-family="Liberation Serif" font-size="20.5" fill="#60808e" fill-opacity="0.26">Animation Ki Duniya</text>
<text x="695" y="742" transform="rotate(-23 695 742)" font-family="Liberation Serif" font-size="20.5" fill="#60808e" fill-opacity="0.26">Animation Ki Duniya</text>
<text x="970" y="652" transform="rotate(-23 970 652)" font-family="Liberation Serif" font-size="20.5" fill="#60808e" fill-opacity="0.26">Animation Ki Duniya</text>
<text x="1050" y="757" transform="rotate(-23 1050 757)" font-family="Liberation Serif" font-size="20.5" fill="#60808e" fill-opacity="0.26">Animation Ki Duniya</text>
<text x="270" y="852" transform="rotate(-23 270 852)" font-family="Liberation Serif" font-size="20.5" fill="#60808e" fill-opacity="0.26">Animation Ki Duniya</text>
<text x="705" y="847" transform="rotate(-23 705 847)" font-family="Liberation Serif" font-size="20.5" fill="#60808e" fill-opacity="0.26">Animation Ki Duniya</text>
<text x="860" y="897" transform="rotate(-23 860 897)" font-family="Liberation Serif" font-size="20.5" fill="#60808e" fill-opacity="0.26">Animation Ki Duniya</text>
<text x="1145" y="797" transform="rotate(-23 1145 797)" font-family="Liberation Serif" font-size="20.5" fill="#60808e" fill-opacity="0.26">Animation Ki Duniya</text>
<text x="430" y="907" transform="rotate(-23 430 907)" font-family="Liberation Serif" font-size="20.5" fill="#60808e" fill-opacity="0.26">Animation Ki Duniya</text>
<text x="1075" y="922" transform="rotate(-23 1075 922)" font-family="Liberation Serif" font-size="20.5" fill="#60808e" fill-opacity="0.26">Animation Ki Duniya</text>
<text x="1190" y="1002" transform="rotate(-23 1190 1002)" font-family="Liberation Serif" font-size="20.5" fill="#60808e" fill-opacity="0.26">Animation Ki Duniya</text>
<text x="395" y="1022" transform="rotate(-23 395 1022)" font-family="Liberation Serif" font-size="20.5" fill="#60808e" fill-opacity="0.26">Animation Ki Duniya</text>
<text x="122" y="660" transform="rotate(-23 122 660)" font-family="Liberation Serif" font-size="20.5" fill="#60808e" fill-opacity="0.26">Animation Ki Duniya</text>
<text x="232" y="556" transform="rotate(-23 232 556)" font-family="Liberation Serif" font-size="20.5" fill="#60808e" fill-opacity="0.26">Animation Ki Duniya</text>
<text x="315" y="705" transform="rotate(-23 315 705)" font-family="Liberation Serif" font-size="20.5" fill="#60808e" fill-opacity="0.26">Animation Ki Duniya</text>
<text x="1280" y="652" transform="rotate(-23 1280 652)" font-family="Liberation Serif" font-size="20.5" fill="#60808e" fill-opacity="0.26">Animation Ki Duniya</text>
<text x="150" y="1002" transform="rotate(-23 150 1002)" font-family="Liberation Serif" font-size="20.5" fill="#60808e" fill-opacity="0.26">Animation Ki Duniya</text>
<text x="860" y="392" transform="rotate(-23 860 392)" font-family="Liberation Serif" font-size="20.5" fill="#60808e" fill-opacity="0.26">Animation Ki Duniya</text>
<text x="1055" y="387" transform="rotate(-23 1055 387)" font-family="Liberation Serif" font-size="20.5" fill="#60808e" fill-opacity="0.26">Animation Ki Duniya</text>
<text x="1240" y="387" transform="rotate(-23 1240 387)" font-family="Liberation Serif" font-size="20.5" fill="#60808e" fill-opacity="0.26">Animation Ki Duniya</text>
<text x="1250" y="467" transform="rotate(-23 1250 467)" font-family="Liberation Serif" font-size="20.5" fill="#60808e" fill-opacity="0.26">Animation Ki Duniya</text>
<text x="85" y="808" transform="rotate(-23 85 808)" font-family="Liberation Serif" font-size="20.5" fill="#60808e" fill-opacity="0.26">Animation Ki Duniya</text>
<text x="555" y="362" transform="rotate(-23 555 362)" font-family="Liberation Serif" font-size="20.5" fill="#60808e" fill-opacity="0.26">Animation Ki Duniya</text>
<text x="1410" y="0" transform="rotate(-23 1410 0)" font-family="Liberation Serif" font-size="20.5" fill="#60808e" fill-opacity="0.26">Animation Ki Duniya</text>
<defs>
<linearGradient id="lg1" x1="0" y1="0" x2="1" y2="1"><stop offset="0" stop-color="#f4e42a"/><stop offset="0.55" stop-color="#c8e040"/><stop offset="1" stop-color="#50d0a0"/></linearGradient>
<linearGradient id="lg2" x1="0" y1="0" x2="0" y2="1"><stop offset="0" stop-color="#ffb070"/><stop offset="0.5" stop-color="#f070c0"/><stop offset="1" stop-color="#b040e0"/></linearGradient>
<linearGradient id="lg3" x1="0" y1="0" x2="1" y2="0"><stop offset="0" stop-color="#f4c020"/><stop offset="1" stop-color="#e85a20"/></linearGradient>
<linearGradient id="faceg" x1="0" y1="0" x2="0" y2="1"><stop offset="0" stop-color="#ee9868"/><stop offset="0.3" stop-color="#f8ad7e"/><stop offset="1" stop-color="#f8ad7e"/></linearGradient>
</defs>
<defs>
<linearGradient id="lgc" x1="0.1" y1="0.1" x2="0.9" y2="0.9"><stop offset="0" stop-color="#f6ea28"/><stop offset="0.5" stop-color="#c4e23e"/><stop offset="1" stop-color="#38cfc0"/></linearGradient>
<linearGradient id="lgt" x1="0" y1="0" x2="0" y2="1"><stop offset="0" stop-color="#ffc080"/><stop offset="0.45" stop-color="#ff70b0"/><stop offset="1" stop-color="#a030e0"/></linearGradient>
<linearGradient id="lgs" x1="0" y1="0" x2="1" y2="0"><stop offset="0" stop-color="#4090e0"/><stop offset="0.4" stop-color="#b060d0"/><stop offset="1" stop-color="#ff70a0"/></linearGradient>
<g id="logo">
<path d="M186 365 C180 385 182 410 196 430 M190 360 C186 380 188 405 200 425 M194 357 C192 375 194 400 205 418 M182 372 C176 392 180 420 192 438" stroke="#1a3a70" stroke-width="0.9" stroke-dasharray="1.5 1.5" fill="none"/>
<ellipse cx="239" cy="403" rx="46" ry="45" fill="url(#lgc)" stroke="#0a3f62" stroke-width="2.2"/>
<path d="M197 402 C212 392 232 390 252 396 C240 398 225 404 212 414 C206 412 200 408 197 402 Z" fill="url(#lgs)"/>
<path d="M214 414 C226 410 240 412 252 418 C244 424 232 428 220 426 Z" fill="#e070d0" opacity="0.85"/>
<path d="M196 379 C196 366 204 354 216 349 L226 344 C226 356 222 370 212 380 C206 384 200 384 196 379 Z" fill="#1e9a5a"/>
<path d="M222 345 L230 340 L226 352 Z" fill="#30e0e8"/>
<ellipse cx="208" cy="368" rx="8.5" ry="9" fill="#f07a1a"/><ellipse cx="207" cy="369" rx="5" ry="5.5" fill="#20b0c0"/><ellipse cx="206" cy="369" rx="3.5" ry="3.8" fill="#1020b0"/>
<path d="M236 352 L244 348 L248 360 L240 366 Z" fill="#1a2a60"/><path d="M230 360 L238 372 M250 358 L258 368" stroke="#1a2a60" stroke-width="0.8" stroke-dasharray="1 1.5"/>
<path d="M214 404 C220 400 228 400 236 402 C244 400 250 396 254 392 C258 388 264 386 268 388 L271 394 L267 396 C264 394 262 396 262 400 C264 406 266 410 270 414 L268 424 L265 423 L266 415 C262 412 258 410 254 410 C256 416 260 420 262 424 L259 425 C254 420 250 415 246 412 C240 414 234 414 230 413 C226 416 222 420 216 424 L214 422 C218 418 222 414 222 410 C218 410 212 412 206 411 Z" fill="#0e1650"/>
<text x="183" y="445" font-family="Liberation Sans" font-weight="bold" font-style="italic" font-size="18" fill="#5a1070" textLength="98" lengthAdjust="spacingAndGlyphs">ANIMATION</text>
<text x="181" y="443" font-family="Liberation Sans" font-weight="bold" font-style="italic" font-size="18" fill="url(#lgt)" textLength="98" lengthAdjust="spacingAndGlyphs">ANIMATION</text>
<text x="229" y="451" font-family="Liberation Sans" font-weight="bold" font-size="9.5" fill="url(#lgt)">KI</text>
<text x="214" y="466" font-family="Liberation Sans" font-weight="bold" font-size="14" fill="#6a1080" textLength="43" lengthAdjust="spacingAndGlyphs">DUNIYA</text>
<text x="213" y="465" font-family="Liberation Sans" font-weight="bold" font-size="14" fill="#e040f0" textLength="43" lengthAdjust="spacingAndGlyphs">DUNIYA</text>
</g></defs>
<use href="#logo"/>
<rect x="178" y="520" width="67" height="66" rx="10" fill="#00005c"/>
<text x="185" y="566" font-family="Liberation Sans" font-weight="bold" font-size="40" fill="#9999ff" textLength="52" lengthAdjust="spacingAndGlyphs">An</text>
<use href="#logo" transform="translate(656 959) scale(0.33) translate(-178 -342)"/>
<text x="696" y="988" font-family="Liberation Sans" font-weight="bold" font-style="italic" font-size="18" fill="url(#lg3)" textLength="220" lengthAdjust="spacingAndGlyphs">www.animationkiduniya.com</text>
<path d="M287 604 L311 609 C309 640 303 670 297 700 L281 698 C282 665 284 630 287 604 Z" fill="#f3b287" stroke="#8a5030" stroke-width="0.7"/>
<path d="M280 696 L297 699 C300 712 300 725 296 735 L292 747 L289 746 L290 734 L286 744 L283 743 L285 731 L280 739 L277 737 L281 725 C276 730 268 738 262 742 L260 739 C266 730 272 718 280 696 Z" fill="#f3b287" stroke="#8a5030" stroke-width="0.7"/>
<path d="M402 606 L431 597 C434 635 433 670 431 702 L410 703 C409 670 408 640 402 606 Z" fill="#f3b287" stroke="#8a5030" stroke-width="0.7"/>
<path d="M421 605 L431 597 C434 635 433 670 431 702 L424 702 C426 665 426 635 421 605 Z" fill="#d9956d"/>
<path d="M410 700 L431 699 C435 712 438 728 437 747 L434 750 L432 738 L430 751 L427 750 L427 738 L424 748 L421 747 L421 735 C416 742 414 748 412 748 C410 738 411 725 413 718 C411 712 410 706 410 700 Z" fill="#f3b287" stroke="#8a5030" stroke-width="0.7"/>
<path d="M320 805 L355 805 L352 918 L325 918 Z" fill="#f3b287" stroke="#8a5030" stroke-width="0.7"/>
<path d="M342 805 L355 805 L352 918 L344 918 C347 880 346 840 342 805 Z" fill="#d9956d" opacity="0.6"/>
<path d="M375 805 L410 805 L406 926 L377 926 Z" fill="#f3b287" stroke="#8a5030" stroke-width="0.7"/>
<path d="M396 805 L410 805 L406 926 L398 926 C401 880 400 840 396 805 Z" fill="#d9956d" opacity="0.6"/>
<path d="M322 900 L352 900 C354 912 356 922 356 930 C335 932 305 936 285 937 C290 928 300 925 312 921 C318 916 321 910 322 900 Z" fill="#f3b287" stroke="#8a5030" stroke-width="0.6"/>
<path d="M280 940 C305 938 330 934 357 931 L356 941 C330 947 305 951 285 951 C279 950 277 945 280 940 Z" fill="#5a2208"/>
<path d="M279 936 C300 933 330 929 356 927 L356 936 C330 940 305 944 283 946 C278 944 277 939 279 936 Z" fill="#b07838"/>
<path d="M293 935 L301 921 C315 924 330 927 345 928" stroke="#3a1608" stroke-width="2.5" fill="none"/>
<ellipse cx="289" cy="933" rx="3" ry="2" fill="#f8e8d0"/>
<path d="M376 908 L407 908 C409 918 410 928 410 937 C390 942 360 950 340 955 C346 945 356 940 366 935 C372 928 375 920 376 908 Z" fill="#f3b287" stroke="#8a5030" stroke-width="0.6"/>
<path d="M337 959 C360 954 385 946 411 938 L410 949 C385 958 360 968 342 971 C336 970 334 964 337 959 Z" fill="#5a2208"/>
<path d="M336 955 C360 948 385 940 410 935 L410 943 C385 951 360 961 340 965 C334 963 333 958 336 955 Z" fill="#b07838"/>
<path d="M350 954 L358 937 C372 939 388 937 400 936" stroke="#3a1608" stroke-width="2.5" fill="none"/>
<ellipse cx="345" cy="953" rx="3" ry="2" fill="#f8e8d0"/>
<path d="M309 686 L411 684 C414 720 416 770 417 807 C400 807 380 806 363 805 C345 804 325 803 308 803 C308 760 308 720 309 686 Z" fill="#775240"/>
<path d="M348 735 C353 740 357 750 359 765 C361 780 362 795 363 805 L333 805 C339 785 344 760 348 735 Z" fill="#573927"/>
<path d="M405 728 C402 760 399 790 397 806 L417 807 C416 780 415 750 413 729 Z" fill="#573927"/>
<path d="M364 690 C380 692 400 690 411 689 L413 735 C410 715 406 704 396 701 C382 698 370 696 364 690 Z" fill="#573927"/>
<path d="M341 691 C344 710 348 725 353 738" stroke="#573927" stroke-width="1" fill="none"/>
<path d="M336 505 L378 500 L380 530 L334 530 Z" fill="#f3b287"/>
<path d="M336 510 C350 522 368 518 378 506 L378 520 C365 528 345 528 336 520 Z" fill="#d9956d" opacity="0.7"/>
<path d="M300 537 C310 528 320 524 330 522 L386 520 C398 523 410 527 418 534 C424 552 428 572 431 592 L432 600 L403 609 C407 630 410 650 411 679 L308 680 C308 655 309 635 311 612 L286 606 C289 580 293 555 300 537 Z" fill="#d6baba" stroke="#5a4444" stroke-width="0.8"/>
<path d="M286 597 L311 603 L311 612 L285 607 Z" fill="#a88888"/>
<path d="M400 601 L431 591 L432 600 L403 610 Z" fill="#a88888"/>
<path d="M335 650 C360 658 385 660 407 645 C405 665 395 672 370 668 Z" fill="#bf9f9f"/>
<path d="M308 600 C312 570 310 560 306 548" stroke="#bf9f9f" stroke-width="2" fill="none"/>
<path d="M330 522 C332 545 345 558 358 558 C372 558 384 545 386 520 Z" fill="#a88888"/>
<path d="M337 522 C339 538 347 549 358 549 C368 549 376 538 378 520 Z" fill="#f3b287"/>
<path d="M345 556 L346 586" stroke="#a58585" stroke-width="2.2"/>
<circle cx="351" cy="562" r="2" fill="#111"/><circle cx="352" cy="589" r="2" fill="#111"/>
<path d="M308 678 L412 673 L412 687 L308 690 Z" fill="#5a2412"/>
<rect x="323" y="677" width="3" height="13" fill="#1a0a04"/><rect x="371" y="675" width="3" height="13" fill="#1a0a04"/><rect x="394" y="674" width="3" height="13" fill="#1a0a04"/>
<rect x="342" y="677" width="17" height="12" fill="#a9a9a9"/>
<path d="M316 458 C313 482 315 503 328 514 C338 521 352 523 365 518 C377 512 382 498 382 482 L380 455 Z" fill="#f3b287" stroke="#8a5030" stroke-width="0.8"/>
<path d="M309 458 C306 446 311 435 320 428 L318 424 L324 425 C330 421 338 419 346 419 L349 414 L352 418 L357 415 L358 419 C375 420 390 428 397 442 C402 452 402 468 400 480 C398 490 394 498 388 503 L383 497 C384 489 383 481 379 475 L374 466 L370 474 L365 457 L359 468 L353 454 L346 468 L341 456 L334 468 L329 459 L323 472 L320 489 L312 482 Z" fill="#111"/>
<ellipse cx="386" cy="489" rx="8" ry="13.5" fill="#f3b287" stroke="#8a5030" stroke-width="0.7"/>
<path d="M389 481 C384 484 383 492 387 498" stroke="#c87850" stroke-width="1.5" fill="none"/>
<ellipse cx="326" cy="484" rx="8" ry="5.5" fill="#fff"/><circle cx="327.5" cy="484" r="4.6" fill="#3a1608"/><circle cx="327.5" cy="484" r="2" fill="#111"/><circle cx="329" cy="482.5" r="1" fill="#fff"/><path d="M318 483 Q326 477 334 482" stroke="#222" stroke-width="1.8" fill="none"/>
<ellipse cx="357" cy="483" rx="8" ry="5.5" fill="#fff"/><circle cx="358.5" cy="483" r="4.6" fill="#3a1608"/><circle cx="358.5" cy="483" r="2" fill="#111"/><circle cx="360" cy="481.5" r="1" fill="#fff"/><path d="M349 482 Q357 476 365 481" stroke="#222" stroke-width="1.8" fill="none"/>
<path d="M317 474 Q326 469 335 473 M349 471 Q358 467 367 472" stroke="#222" stroke-width="1.6" fill="none"/>
<path d="M339 482 L336 498 Q340 502 346 499" stroke="#a05a38" stroke-width="0.8" fill="none"/>
<ellipse cx="342" cy="506" rx="7" ry="2.6" fill="#d58a6a"/>
<path d="M552 525 C556 512 564 504 573 501 L578 502 L586 518 L584 540 L583 562 L573 587 L541 569 Z" fill="#d6baba" stroke="#5a4444" stroke-width="0.8"/>
<path d="M542 561 L575 578 L573 588 L540 570 Z" fill="#a88888"/>
<path d="M540 569 L573 587 C571 600 566 613 556 616 C545 617 538 608 539 595 Z" fill="#f3b287" stroke="#8a5030" stroke-width="0.7"/>
<path d="M637 509 L669 479 L676 548 L635 548 Z" fill="#d9916a"/>
<path d="M602 537 C612 528 625 522 632 520 L686 518 C698 521 708 527 712 535 L714 600 L715 671 C690 677 640 680 607 679 L608 600 Z" fill="#d6baba" stroke="#5a4444" stroke-width="0.8"/>
<path d="M630 520 C632 543 645 555 658 555 C672 555 684 543 686 518 Z" fill="#a88888"/>
<path d="M637 520 C639 536 647 547 658 547 C668 547 676 536 678 518 Z" fill="#f3b287"/>
<path d="M658 548 C668 547 676 536 678 518 L676 500 L669 479 C660 490 650 500 640 510 L637 520 C639 536 647 547 658 548 Z" fill="#f3b287" opacity="0.0"/>
<path d="M645 553 L646 584" stroke="#a58585" stroke-width="2.2"/>
<circle cx="651" cy="561" r="2" fill="#111"/><circle cx="652" cy="589" r="2" fill="#111"/>
<path d="M640 645 C665 655 690 655 712 640 C712 662 700 672 675 668 Z" fill="#bf9f9f"/>
<path d="M551 656 L576 662 C571 685 565 705 560 723 C562 738 562 752 559 765 L556 772 L553 770 L554 758 L549 768 L546 766 L548 755 L542 763 L539 761 L543 750 C538 752 533 756 530 757 L529 754 C535 745 538 735 541 723 C545 700 549 680 551 656 Z" fill="#f3b287" stroke="#8a5030" stroke-width="0.7"/>
<path d="M566 659 L576 662 C571 685 565 705 560 723 L555 722 C559 705 563 685 566 659 Z" fill="#d9956d" opacity="0.5"/>
<path d="M605 708 C640 706 680 707 715 705 L716 726 C680 728 640 730 606 730 Z" fill="#4a1808"/>
<rect x="621" y="704" width="4" height="26" fill="#150602"/><rect x="671" y="704" width="4" height="26" fill="#150602"/><rect x="694" y="704" width="4" height="25" fill="#150602"/>
<path d="M641 714 L658 713 L659 730 L641 731 Z" fill="#a9a9a9"/>
<path d="M810 404 C815 392 822 384 830 382 L838 376 L844 380 C852 375 862 374 870 378 L878 374 L876 382 C890 388 897 396 898 404 C901 418 900 434 896 448 C892 458 885 460 878 460 C855 456 835 452 818 446 C810 440 808 425 810 404 Z" fill="#111"/>
<path d="M825 400 L832 392 L838 405 L846 392 L852 408 L858 395 L865 410 C875 420 880 432 878 447" stroke="#333" stroke-width="0.7" fill="none"/>
<path d="M901 440 C903 428 913 420 930 418 C950 417 962 425 965 443 C967 458 967 478 960 490 C953 500 940 502 928 501 C915 499 906 492 902 478 C899 465 899 452 901 440 Z" fill="url(#faceg)" stroke="#c0683a" stroke-width="0.8"/>
<path d="M950 425 C962 432 965 450 965 470 C963 485 958 495 950 498 C957 480 958 450 950 425 Z" fill="#e99a6c" opacity="0.7"/>
<path d="M990 432 C996 434 998 442 996 450 C994 456 988 460 984 459 C981 455 982 445 984 438 C985 434 987 432 990 432 Z" fill="#f4a878" stroke="#c0683a" stroke-width="0.7"/>
<path d="M841 512 Q850 504 859 512 Z" fill="#e0a080" opacity="0.7"/><ellipse cx="850" cy="514" rx="8" ry="5" fill="#fff"/><circle cx="851" cy="514" r="4.3" fill="#3a1608"/><circle cx="851" cy="514" r="1.8" fill="#111"/><circle cx="852.5" cy="512.5" r="1" fill="#fff"/><path d="M842 513 Q850 507 859 513" stroke="#222" stroke-width="1.6" fill="none"/>
<path d="M870 511 Q879 503 888 511 Z" fill="#e0a080" opacity="0.7"/><ellipse cx="879" cy="513" rx="8" ry="5" fill="#fff"/><circle cx="880" cy="513" r="4.3" fill="#3a1608"/><circle cx="880" cy="513" r="1.8" fill="#111"/><circle cx="881.5" cy="511.5" r="1" fill="#fff"/><path d="M871 512 Q879 506 888 512" stroke="#222" stroke-width="1.6" fill="none"/>
<path d="M842 506 Q849 501 856 505 M870 504 Q878 500 887 505" stroke="#222" stroke-width="1.6" fill="none"/>
<path d="M859 508 L858 527 Q862 531 867 529 L873 527" stroke="#b06a48" stroke-width="0.8" fill="none"/>
<path d="M855 548 Q865 543 876 548 Q865 553 855 548 Z" fill="#e0885a"/>
<path d="M777 633 C780 628 795 627 816 628 C828 630 836 640 838 661 L837 702 L833 758 C820 762 800 764 775 758 L776 700 Z" fill="#775240"/>
<path d="M790 628 L816 628 C828 630 836 640 838 661 L837 702 L833 758 C822 761 810 762 803 762 C815 720 818 680 810 655 C805 640 798 632 790 628 Z" fill="#573927"/>
<path d="M899 646 C902 640 906 642 908 644 C914 646 918 646 923 644 L923 704 L912 704 C905 690 900 670 899 646 Z" fill="#775240" stroke="#573927" stroke-width="0.8"/>
<path d="M907 645 C906 665 908 690 914 704" stroke="#573927" stroke-width="1" fill="none"/>
<path d="M982 631 C992 632 1000 629 1012 623 C1025 617 1033 610 1040 601 C1046 610 1052 630 1054 660 L1055 700 L1050 752 C1035 757 1015 758 997 753 L990 700 Z" fill="#775240"/>
<path d="M982 631 C992 632 1000 629 1012 623 C1025 617 1033 610 1040 601 C1046 610 1052 630 1054 660 L1055 700 L1050 752 C1042 755 1035 756 1028 756 C1040 720 1042 680 1040 650 C1030 645 1000 643 984 644 Z" fill="#573927"/>
<path d="M1128 653 L1167 653 L1167 712 C1167 725 1158 731 1148 731 C1137 731 1130 724 1130 712 Z" fill="#e8b28e" stroke="#8a5030" stroke-width="0.6"/>
<path d="M1128 653 L1167 653 L1167 698 L1130 698 Z" fill="#cf906c"/>
<path d="M1203 678 L1241 678 L1241 738 C1241 750 1233 757 1222 757 C1211 757 1203 750 1203 738 Z" fill="#e8b28e" stroke="#8a5030" stroke-width="0.6"/>
<path d="M1203 678 L1241 678 L1241 725 L1203 725 Z" fill="#cf906c"/>
<path d="M1257 538 C1259 528 1262 523 1267 523 L1284 533 C1292 555 1296 575 1300 590 L1268 604 Z" fill="#d6baba" stroke="#5a4444" stroke-width="0.8"/>
<path d="M1267 596 L1299 584 L1301 595 L1269 607 Z" fill="#a88888"/>
<path d="M1269 606 L1301 594 C1304 610 1305 624 1297 632 C1286 636 1275 628 1272 615 Z" fill="#f3b287" stroke="#8a5030" stroke-width="0.7"/>
<path d="M1274 657 L1300 655 C1299 680 1298 705 1297 728 C1302 740 1305 755 1303 772 L1298 783 L1294 782 L1293 772 L1290 781 L1287 780 L1287 770 L1283 776 L1280 774 L1280 760 C1276 748 1275 738 1275 728 C1275 705 1274 680 1274 657 Z" fill="#f3b287" stroke="#8a5030" stroke-width="0.7"/>
<path d="M1292 656 L1300 655 C1299 680 1298 705 1297 728 L1292 728 C1293 705 1293 680 1292 656 Z" fill="#d9956d" opacity="0.6"/>
<path d="M1068 792 C1068 786 1075 784 1085 784 C1095 784 1102 787 1102 795 L1098 900 C1097 906 1092 910 1085 910 C1078 910 1072 906 1072 900 Z" fill="#e9b28f" stroke="#8a5030" stroke-width="0.6"/>
<path d="M1092 785 C1098 786 1102 789 1102 795 L1098 900 C1097 905 1095 907 1092 908 C1094 870 1094 820 1092 785 Z" fill="#d9956d" opacity="0.6"/>
<path d="M1242 800 C1242 794 1249 792 1258 792 C1268 792 1276 795 1276 803 L1272 908 C1271 914 1266 918 1259 918 C1252 918 1246 914 1246 908 Z" fill="#e9b28f" stroke="#8a5030" stroke-width="0.6"/>
<path d="M1266 793 C1272 794 1276 797 1276 803 L1272 908 C1271 913 1269 915 1266 916 C1268 878 1268 828 1266 793 Z" fill="#d9956d" opacity="0.6"/>
<path d="M1072 935 C1072 926 1080 922 1086 922 C1093 922 1097 928 1097 935 L1099 960 C1101 968 1100 972 1096 974 C1075 978 1050 981 1032 980 C1027 979 1026 973 1030 969 C1045 960 1062 950 1068 940 Z" fill="#e9b28f" stroke="#8a5030" stroke-width="0.6"/>
<path d="M1028 974 C1050 976 1080 972 1100 968 C1103 970 1103 977 1099 980 C1080 986 1050 990 1032 989 C1026 988 1024 978 1028 974 Z" fill="#a87035" stroke="#5a2208" stroke-width="1.8"/>
<path d="M1072 935 C1072 926 1080 922 1086 922 C1093 922 1097 928 1097 935 L1099 960 C1101 966 1100 970 1096 972 C1075 976 1050 977 1034 976 C1040 966 1060 952 1068 940 Z" fill="#e9b28f"/>
<path d="M1042 974 L1050 958 C1062 962 1075 966 1094 966" stroke="#3a1608" stroke-width="2.4" fill="none"/>
<ellipse cx="1036" cy="972" rx="3" ry="2" fill="#f8e8d0"/>
<path d="M1213 928 C1213 920 1220 916 1226 916 C1233 916 1237 921 1237 928 L1240 948 C1243 955 1242 960 1238 962 C1218 972 1195 981 1176 984 C1170 984 1168 978 1172 973 C1188 962 1204 950 1210 938 Z" fill="#e9b28f" stroke="#8a5030" stroke-width="0.6"/>
<path d="M1170 976 C1195 975 1222 965 1241 955 C1245 957 1246 963 1242 967 C1222 978 1195 990 1176 992 C1168 992 1165 981 1170 976 Z" fill="#a87035" stroke="#5a2208" stroke-width="1.8"/>
<path d="M1213 928 C1213 920 1220 916 1226 916 C1233 916 1237 921 1237 928 L1240 948 C1242 954 1241 958 1238 960 C1218 969 1195 977 1178 979 C1186 968 1204 950 1210 938 Z" fill="#e9b28f"/>
<path d="M1182 977 L1190 958 C1202 958 1218 958 1234 954" stroke="#3a1608" stroke-width="2.4" fill="none"/>
<ellipse cx="1178" cy="974" rx="3" ry="2" fill="#f8e8d0"/>
</svg>
<!-- SVG END -->


<!-- doc content -->
<div class="t" style="left:77px;top:269px;font-size:14.4px;font-weight:bold;color:#f2f2f2">animation ki duniya logo.fla</div>
<svg style="left:270px;top:271px" width="9" height="9" viewBox="0 0 9 9"><path d="M1 1L8 8M8 1L1 8" stroke="#bbb" stroke-width="1.5"/></svg>
<svg style="left:85px;top:299px" width="23" height="22" viewBox="0 0 23 22"><circle cx="11" cy="5.5" r="5" fill="#c2c2c2"/><circle cx="5" cy="12" r="5" fill="#c2c2c2"/><circle cx="17" cy="12" r="5" fill="#c2c2c2"/><path d="M11 10L14 19H8Z" fill="#c2c2c2"/><path d="M23 18V22H19Z" fill="#c2c2c2"/></svg>
<div class="a" style="left:125px;top:296px;width:1px;height:28px;background:#444"></div>
<div class="t" style="left:151px;top:304px;font-size:16px;color:#e2e2e2;transform:scaleX(0.89);transform-origin:left">Scene 1</div>
<svg style="left:237px;top:306px" width="14" height="9" viewBox="0 0 14 9"><path d="M1.5 1.5L7 7L12.5 1.5" stroke="#ddd" stroke-width="2.2" fill="none"/></svg>
<svg style="left:1232px;top:300px" width="23" height="19" viewBox="0 0 23 19"><path d="M12.7 0V18.6M0.5 9.6H22" stroke="#555" stroke-width="1"/><rect x="7" y="4" width="11" height="11" fill="none" stroke="#555" stroke-width="1"/></svg>
<svg style="left:1274px;top:299px" width="24" height="22" viewBox="0 0 24 22"><path d="M3 14 C2 13 1 12.5 1.5 12 C2.5 11 4 12 5 13 L5 9 C5 8 6.5 8 6.5 9 L6.5 12 L6.8 7.5 C6.8 6.5 8.3 6.5 8.3 7.5 L8.5 12 L9 8 C9 7 10.5 7 10.5 8 L10.5 12.5 L12 9.5 C12.3 8.8 13.8 9.2 13.5 10 L12.5 15 C12 19 10 21.5 7.5 21.5 C5.5 21.5 4 20 3 18 Z" fill="#c2c2c2" stroke="#c2c2c2" stroke-width="0.8"/><path d="M2.5 6.5 C3 3 5.5 1.5 8 2" stroke="#c2c2c2" stroke-width="1.5" fill="none"/><path d="M7 0 L10.5 2.3 L7.5 4.5Z" fill="#c2c2c2"/><path d="M11.5 3.5 L22 13 L15 20" stroke="#c2c2c2" stroke-width="1.6" fill="none"/></svg>
<div class="a" style="left:1310px;top:295px;width:30px;height:30px;border-radius:5px;background:#474747"></div>
<svg style="left:1315px;top:300px" width="20" height="20" viewBox="0 0 20 20"><defs><pattern id="hatch" width="3" height="3" patternUnits="userSpaceOnUse" patternTransform="rotate(45)"><rect width="1.4" height="3" fill="#8a8a8a"/></pattern></defs><rect x="0" y="0" width="20" height="20" fill="url(#hatch)"/><rect x="4.5" y="4.5" width="11" height="11" fill="#474747" stroke="#e0e0e0" stroke-width="1.8"/></svg>
<div class="a" style="left:1350px;top:295px;width:125px;height:30px;border-radius:5px;background:#363636"></div>
<svg style="left:1355px;top:299px" width="11" height="23" viewBox="0 0 11 23"><path d="M1 6L5.5 1.5L10 6M1 17L5.5 21.5L10 17" stroke="#bbb" stroke-width="1.2" fill="none"/></svg>
<div class="a" style="left:1373px;top:296px;width:79px;height:28px;background:#222"></div>
<div class="t" style="left:1389px;top:303px;font-size:16px;color:#ececec">50%</div>
<svg style="left:1457px;top:306px" width="12" height="8" viewBox="0 0 12 8"><path d="M1 1L6 6L11 1" stroke="#bbb" stroke-width="1.3" fill="none"/></svg>

<!-- RIGHT ICON COLUMN -->
<div class="a" style="left:1486px;top:50px;width:2px;height:967px;background:#1e1e1e"></div>
<div class="a" style="left:1488px;top:50px;width:432px;height:14px;background:#2c2c2c"></div>
<div class="a" style="left:1488px;top:64px;width:47px;height:953px;background:#323232"></div>
<div class="a" style="left:1488px;top:64px;width:47px;height:1px;background:#1e1e1e"></div>
<div class="a" style="left:1490px;top:149px;width:44px;height:2px;background:#262626"></div>
<div class="a" style="left:1490px;top:409px;width:44px;height:2px;background:#262626"></div>
<svg style="left:1520px;top:54px" width="8" height="6" viewBox="0 0 8 6"><path d="M3.6 0.3L0.3 3L3.6 5.7Z M7.6 0.3L4.3 3L7.6 5.7Z" fill="#ddd"/></svg>
<svg style="left:1501px;top:68px" width="24" height="6" viewBox="0 0 24 6"><rect x="0.0" y="0" width="1.2" height="6" fill="#555"/><rect x="3.3" y="0" width="1.2" height="6" fill="#555"/><rect x="6.6" y="0" width="1.2" height="6" fill="#555"/><rect x="9.899999999999999" y="0" width="1.2" height="6" fill="#555"/><rect x="13.2" y="0" width="1.2" height="6" fill="#555"/><rect x="16.5" y="0" width="1.2" height="6" fill="#555"/><rect x="19.799999999999997" y="0" width="1.2" height="6" fill="#555"/><rect x="23.099999999999998" y="0" width="1.2" height="6" fill="#555"/></svg>
<svg style="left:1500px;top:85px" width="25" height="18" viewBox="0 0 25 18"><path d="M12 0C20 0 25 4 25 9C25 12 22 12 20 11C18 10 16 12 18 14C19 16 16 18 12 18C5 18 0 14 0 9C0 4 5 0 12 0Z" fill="#c2c2c2"/><circle cx="6" cy="8" r="2" fill="#323232"/><circle cx="10" cy="13" r="2" fill="#323232"/><circle cx="15" cy="5" r="2" fill="#323232"/><circle cx="9" cy="4" r="1.6" fill="#323232"/><circle cx="21" cy="6.5" r="1.6" fill="#323232"/></svg>
<svg style="left:1502px;top:122px" width="21" height="15" viewBox="0 0 21 15"><rect x="0" y="0" width="21" height="15" fill="#c2c2c2"/><rect x="1.5" y="1.5" width="5" height="5.5" fill="#7a7a7a"/><rect x="14.5" y="1.5" width="5" height="5.5" fill="#7a7a7a"/><rect x="8" y="8" width="5" height="5.5" fill="#7a7a7a"/><rect x="1.5" y="8" width="5" height="5.5" fill="#9a9a9a"/></svg>
<svg style="left:1501px;top:157px" width="24" height="6" viewBox="0 0 24 6"><rect x="0.0" y="0" width="1.2" height="6" fill="#555"/><rect x="3.3" y="0" width="1.2" height="6" fill="#555"/><rect x="6.6" y="0" width="1.2" height="6" fill="#555"/><rect x="9.899999999999999" y="0" width="1.2" height="6" fill="#555"/><rect x="13.2" y="0" width="1.2" height="6" fill="#555"/><rect x="16.5" y="0" width="1.2" height="6" fill="#555"/><rect x="19.799999999999997" y="0" width="1.2" height="6" fill="#555"/><rect x="23.099999999999998" y="0" width="1.2" height="6" fill="#555"/></svg>
<svg style="left:1502px;top:170px" width="21" height="24" viewBox="0 0 21 24"><rect x="0" y="0" width="1.8" height="24" fill="#c2c2c2"/><rect x="4" y="4" width="10" height="6" fill="#c2c2c2"/><rect x="4" y="13" width="17" height="6" fill="#c2c2c2"/></svg>
<svg style="left:1501px;top:205px" width="22" height="22" viewBox="0 0 22 22"><circle cx="11" cy="11" r="10.5" fill="#c2c2c2"/><circle cx="11" cy="5.5" r="2" fill="#323232"/><path d="M8 9H12.5V16H14V18H8V16H9.5V11H8Z" fill="#323232"/></svg>
<svg style="left:1502px;top:241px" width="21" height="21" viewBox="0 0 21 21"><rect x="3" y="3" width="15" height="15" fill="none" stroke="#c2c2c2" stroke-width="1.6"/><rect x="0" y="0" width="5" height="5" fill="#c2c2c2"/><rect x="16" y="0" width="5" height="5" fill="#c2c2c2"/><rect x="0" y="16" width="5" height="5" fill="#c2c2c2"/><rect x="16" y="16" width="5" height="5" fill="#c2c2c2"/><rect x="8" y="0" width="5" height="3" fill="#c2c2c2"/><rect x="8" y="18" width="5" height="3" fill="#c2c2c2"/><rect x="0" y="8" width="3" height="5" fill="#c2c2c2"/><rect x="18" y="8" width="3" height="5" fill="#c2c2c2"/><circle cx="10.5" cy="10.5" r="1.2" fill="#c2c2c2"/></svg>
<div class="a" style="left:1490px;top:271px;width:44px;height:2px;background:#262626"></div>
<svg style="left:1501px;top:276px" width="24" height="6" viewBox="0 0 24 6"><rect x="0.0" y="0" width="1.2" height="6" fill="#555"/><rect x="3.3" y="0" width="1.2" height="6" fill="#555"/><rect x="6.6" y="0" width="1.2" height="6" fill="#555"/><rect x="9.899999999999999" y="0" width="1.2" height="6" fill="#555"/><rect x="13.2" y="0" width="1.2" height="6" fill="#555"/><rect x="16.5" y="0" width="1.2" height="6" fill="#555"/><rect x="19.799999999999997" y="0" width="1.2" height="6" fill="#555"/><rect x="23.099999999999998" y="0" width="1.2" height="6" fill="#555"/></svg>
<svg style="left:1500px;top:293px" width="25" height="20" viewBox="0 0 25 20"><rect x="0" y="2" width="5" height="18" fill="#c2c2c2"/><rect x="6.5" y="0" width="5" height="20" fill="#c2c2c2"/><path d="M13 3L17.5 1.5L25 18.5L20.5 20Z" fill="#c2c2c2"/><rect x="1.5" y="8" width="2" height="5" fill="#323232"/><rect x="8" y="4" width="2" height="5" fill="#323232"/></svg>
<svg style="left:1508px;top:324px" width="18" height="14" viewBox="0 0 18 14"><circle cx="9" cy="3" r="3" fill="#c2c2c2"/><path d="M2 14C2 9 5 7 9 7C13 7 16 9 16 14Z" fill="#c2c2c2"/></svg>
<svg style="left:1501px;top:364px" width="24" height="6" viewBox="0 0 24 6"><rect x="0.0" y="0" width="1.2" height="6" fill="#555"/><rect x="3.3" y="0" width="1.2" height="6" fill="#555"/><rect x="6.6" y="0" width="1.2" height="6" fill="#555"/><rect x="9.899999999999999" y="0" width="1.2" height="6" fill="#555"/><rect x="13.2" y="0" width="1.2" height="6" fill="#555"/><rect x="16.5" y="0" width="1.2" height="6" fill="#555"/><rect x="19.799999999999997" y="0" width="1.2" height="6" fill="#555"/><rect x="23.099999999999998" y="0" width="1.2" height="6" fill="#555"/></svg>
<svg style="left:1501px;top:377px" width="22" height="22" viewBox="0 0 22 22"><path d="M4 18H1V1H17V4" stroke="#c2c2c2" stroke-width="1.6" fill="none"/><rect x="4.5" y="4.5" width="16" height="16" fill="none" stroke="#c2c2c2" stroke-width="1.8"/><path d="M12 4.5H17V11L14.5 9L12 11Z" fill="#c2c2c2"/></svg>
<div class="a" style="left:1535px;top:64px;width:2px;height:953px;background:#1e1e1e"></div>

<!-- PROPERTIES -->
<div class="a" style="left:1537px;top:64px;width:383px;height:953px;background:#323232"></div>
<div class="a" style="left:1617px;top:64px;width:303px;height:22px;background:#2b2b2b"></div>




<!-- properties content -->
<svg style="left:1903px;top:54px" width="8" height="6" viewBox="0 0 8 6"><path d="M0.4 0.3L3.7 3L0.4 5.7Z M4.4 0.3L7.7 3L4.4 5.7Z" fill="#ddd"/></svg>
<div class="t" style="left:1547px;top:69px;font-size:12px;font-weight:bold;color:#f2f2f2">Properties</div>
<svg style="left:1898px;top:71px" width="13" height="10" viewBox="0 0 13 10"><path d="M0 1H13M0 4H13M0 7H13M0 9.5H13" stroke="#bdbdbd" stroke-width="1.3"/></svg>
<div class="a" style="left:1728px;top:100px;width:90px;height:39px;border-radius:5px;background:#474747"></div>
<div class="t" style="left:1575px;top:113px;font-size:17px;color:#8a8a8a">Tool</div>
<div class="t" style="left:1659px;top:113px;font-size:17px;color:#8a8a8a;transform:scaleX(0.92);transform-origin:left">Object</div>
<div class="t" style="left:1749px;top:113px;font-size:17px;color:#f2f2f2;transform:scaleX(0.9);transform-origin:left">Frame</div>
<div class="t" style="left:1850px;top:113px;font-size:17px;color:#e8e8e8;transform:scaleX(0.92);transform-origin:left">Doc</div>
<div class="a" style="left:1538px;top:147px;width:380px;height:3px;background:#282828"></div>
<svg style="left:1573px;top:169px" width="22" height="24" viewBox="0 0 22 24"><rect x="1" y="2" width="20" height="18" fill="none" stroke="#c2c2c2" stroke-width="1.6"/><path d="M11 0V24M6 3V19M16 3V19" stroke="#c2c2c2" stroke-width="1.4"/><circle cx="4" cy="16" r="1.2" fill="#c2c2c2"/><circle cx="11" cy="16" r="1.5" fill="#eee"/><circle cx="18" cy="16" r="1.2" fill="#c2c2c2"/></svg>
<div class="t" style="left:1617px;top:173px;font-size:17px;color:#9a9a9a;transform:scaleX(0.9);transform-origin:left">Frame</div>
<svg style="left:1862px;top:169px" width="22" height="22" viewBox="0 0 22 22"><circle cx="11" cy="11" r="9.5" fill="none" stroke="#c2c2c2" stroke-width="1.8"/><path d="M7 15L15 7M9 7H15V13" stroke="#c2c2c2" stroke-width="2" fill="none"/></svg>
<div class="a" style="left:1538px;top:209px;width:380px;height:3px;background:#282828"></div>
<div class="a" style="left:1563px;top:222px;width:40px;height:40px;border-radius:6px;background:#262626;border:1px solid #3e3e3e"></div>
<svg style="left:1574px;top:233px" width="18" height="18" viewBox="0 0 18 18"><rect x="0" y="7" width="10" height="10" fill="#e0e0e0"/><rect x="6" y="1" width="11" height="10" fill="#e0e0e0"/><path d="M8.5 6H14M11.5 3.5L14 6L11.5 8.5" stroke="#262626" stroke-width="1.5" fill="none"/></svg>
<div class="a" style="left:1618px;top:222px;width:40px;height:40px;border-radius:6px;background:#383838"></div>
<svg style="left:1628px;top:234px" width="20" height="16" viewBox="0 0 20 16"><path d="M6 1L0.5 8L6 15M14 1L19.5 8L14 15M5 8H15" stroke="#555" stroke-width="3" fill="none"/></svg>
<div class="a" style="left:1673px;top:222px;width:40px;height:40px;border-radius:6px;background:#383838"></div>
<svg style="left:1684px;top:233px" width="18" height="18" viewBox="0 0 18 18"><circle cx="5" cy="12" r="5" fill="#555"/><rect x="6" y="1" width="11" height="10" fill="#555"/><path d="M8.5 6H14M11.5 3.5L14 6L11.5 8.5" stroke="#383838" stroke-width="1.5" fill="none"/></svg>
<div class="a" style="left:1538px;top:272px;width:380px;height:3px;background:#282828"></div>
<div class="a" style="left:1905px;top:277px;width:5px;height:598px;border-radius:3px;background:#5a5a5a"></div>
<svg style="left:1563px;top:297px" width="12" height="8" viewBox="0 0 12 8"><path d="M1.5 1.5L6 6L10.5 1.5" stroke="#d0d0d0" stroke-width="2" fill="none"/></svg>
<div class="t" style="left:1589px;top:294px;font-size:15.5px;font-weight:bold;color:#dcdcdc">Label</div>
<div class="t" style="left:1564px;top:349px;font-size:13.5px;color:#a8a8a8">Name</div>
<div class="a" style="left:1630px;top:335px;width:262px;height:39px;border-radius:5px;background:#262626;border:1px solid #3f3f3f"></div>
<div class="t" style="left:1647px;top:348px;font-size:16px;color:#707070">Type here</div>
<div class="t" style="left:1564px;top:399px;font-size:13.5px;color:#a8a8a8">Type</div>
<div class="a" style="left:1630px;top:385px;width:262px;height:39px;border-radius:5px;background:#393939"></div>
<div class="t" style="left:1645px;top:398px;font-size:16px;color:#707070">Name</div>
<svg style="left:1864px;top:401px" width="12" height="8" viewBox="0 0 12 8"><path d="M1.5 1.5L6 6L10.5 1.5" stroke="#777" stroke-width="2" fill="none"/></svg>
<div class="a" style="left:1538px;top:444px;width:360px;height:3px;background:#282828"></div>
<svg style="left:1563px;top:469px" width="12" height="8" viewBox="0 0 12 8"><path d="M1.5 1.5L6 6L10.5 1.5" stroke="#d0d0d0" stroke-width="2" fill="none"/></svg>
<div class="t" style="left:1589px;top:466px;font-size:15.3px;font-weight:bold;color:#dcdcdc">Sound</div>
<div class="t" style="left:1564px;top:521px;font-size:13.5px;color:#a8a8a8">Name</div>
<div class="a" style="left:1630px;top:508px;width:262px;height:39px;border-radius:5px;background:#2a2a2a;border:1px solid #4a4a4a"></div>
<div class="t" style="left:1645px;top:520px;font-size:16px;color:#f0f0f0">None</div>
<svg style="left:1864px;top:523px" width="12" height="8" viewBox="0 0 12 8"><path d="M1.5 1.5L6 6L10.5 1.5" stroke="#f0f0f0" stroke-width="2" fill="none"/></svg>
<div class="t" style="left:1564px;top:571px;font-size:13.5px;color:#a8a8a8">Effect</div>
<div class="a" style="left:1630px;top:557px;width:190px;height:40px;border-radius:5px;background:#393939"></div>
<div class="t" style="left:1645px;top:570px;font-size:16px;color:#707070">None</div>
<svg style="left:1792px;top:573px" width="12" height="8" viewBox="0 0 12 8"><path d="M1.5 1.5L6 6L10.5 1.5" stroke="#777" stroke-width="2" fill="none"/></svg>
<div class="a" style="left:1833px;top:557px;width:59px;height:40px;border-radius:5px;background:#393939"></div>
<svg style="left:1851px;top:567px" width="24" height="20" viewBox="0 0 24 20"><path d="M0 6H5L11 1V17L5 12H0Z" fill="#555"/><path d="M13 4L19 10L13 16" stroke="#555" stroke-width="3" fill="none"/></svg>
<div class="t" style="left:1564px;top:621px;font-size:13.5px;color:#a8a8a8">Sync</div>
<div class="a" style="left:1630px;top:607px;width:262px;height:40px;border-radius:5px;background:#393939"></div>
<div class="t" style="left:1645px;top:620px;font-size:16px;color:#707070">Event</div>
<svg style="left:1864px;top:623px" width="12" height="8" viewBox="0 0 12 8"><path d="M1.5 1.5L6 6L10.5 1.5" stroke="#777" stroke-width="2" fill="none"/></svg>
<div class="a" style="left:1630px;top:657px;width:188px;height:40px;border-radius:5px;background:#393939"></div>
<div class="t" style="left:1645px;top:670px;font-size:16px;color:#707070">Repeat</div>
<svg style="left:1790px;top:673px" width="12" height="8" viewBox="0 0 12 8"><path d="M1.5 1.5L6 6L10.5 1.5" stroke="#777" stroke-width="2" fill="none"/></svg>
<div class="t" style="left:1831px;top:670px;font-size:16px;color:#777">x 1</div>
<div class="a" style="left:1831px;top:696px;width:61px;height:1px;background:#444"></div>
<div class="t" style="left:1630px;top:714px;font-size:15.3px;color:#cfcfcf;transform:scaleX(0.97);transform-origin:left">No sound selected</div>
<div class="a" style="left:1538px;top:753px;width:360px;height:3px;background:#282828"></div>
<svg style="left:1563px;top:777px" width="12" height="8" viewBox="0 0 12 8"><path d="M1.5 1.5L6 6L10.5 1.5" stroke="#d0d0d0" stroke-width="2" fill="none"/></svg>
<div class="t" style="left:1589px;top:774px;font-size:14.8px;font-weight:bold;color:#dcdcdc">Color Effects</div>
<div class="a" style="left:1563px;top:816px;width:330px;height:39px;border-radius:5px;background:#2a2a2a;border:1px solid #464646"></div>
<div class="t" style="left:1579px;top:829px;font-size:16px;color:#f0f0f0">None</div>
<svg style="left:1864px;top:832px" width="12" height="8" viewBox="0 0 12 8"><path d="M1.5 1.5L6 6L10.5 1.5" stroke="#f0f0f0" stroke-width="2" fill="none"/></svg>
<div class="a" style="left:1538px;top:875px;width:360px;height:3px;background:#282828"></div>
<svg style="left:1563px;top:900px" width="12" height="8" viewBox="0 0 12 8"><path d="M1.5 1.5L6 6L10.5 1.5" stroke="#d0d0d0" stroke-width="2" fill="none"/></svg>
<div class="t" style="left:1589px;top:897px;font-size:15px;font-weight:bold;color:#dcdcdc">Blend</div>
<div class="a" style="left:1563px;top:945px;width:18px;height:17px;border-radius:3px;border:2px solid #9a9a9a"></div>
<div class="t" style="left:1594px;top:947px;font-size:15.5px;color:#e6e6e6">Hide object</div>
<div class="t" style="left:1564px;top:992px;font-size:13.5px;color:#9a9a9a">Blend</div>
<div class="a" style="left:1636px;top:979px;width:257px;height:45px;border-radius:5px;background:#2a2a2a;border:1px solid #464646"></div>
<div class="t" style="left:1652px;top:992px;font-size:16px;color:#f0f0f0">Normal</div>
<svg style="left:1864px;top:995px" width="12" height="8" viewBox="0 0 12 8"><path d="M1.5 1.5L6 6L10.5 1.5" stroke="#f0f0f0" stroke-width="2" fill="none"/></svg>


<!-- tooltip -->
<div class="a" style="left:1326px;top:338px;width:211px;height:25px;background:#fbfbfb;border-radius:2px;box-shadow:0 1px 2px rgba(0,0,0,0.3)"></div>
<div class="t" style="left:1332px;top:343px;font-size:15px;color:#4a4a4a">Clip content outside the stage</div>
</body></html>
